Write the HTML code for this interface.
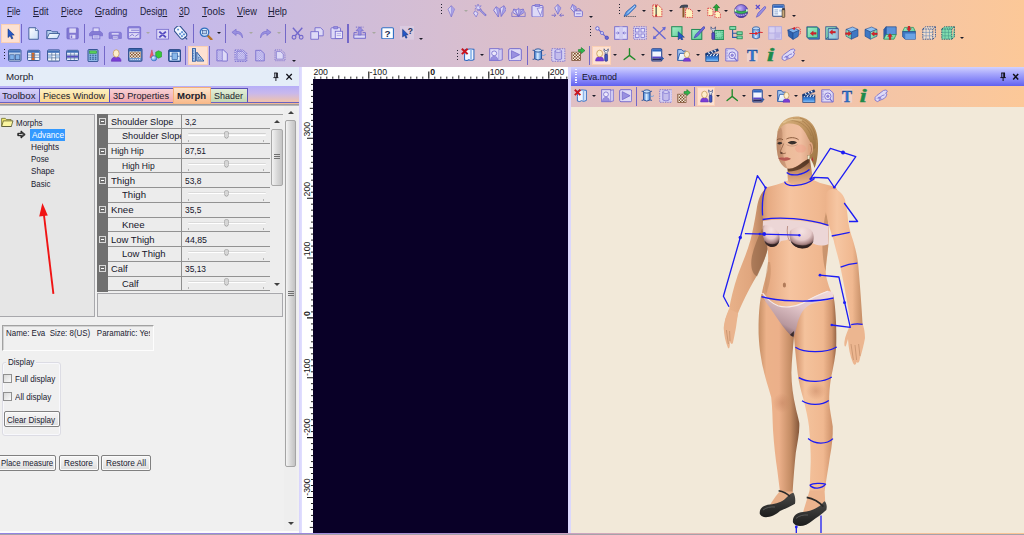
<!DOCTYPE html>
<html>
<head>
<meta charset="utf-8">
<title>Eva.mod</title>
<style>
html,body{margin:0;padding:0;}
body{width:1024px;height:535px;overflow:hidden;position:relative;background:#f0f0f0;font-family:"Liberation Sans",sans-serif;font-size:9.6px;color:#1a1a2a;}
.abs{position:absolute;}
.t{position:absolute;white-space:nowrap;line-height:1;transform-origin:0 0;}
#top{left:0;top:0;width:1024px;height:68px;background:linear-gradient(90deg,#b8b8fa 0%,#c3b9ef 15%,#ccbcde 29%,#d6bed2 43%,#e2c0c1 59%,#f2c4aa 83%,#fcc898 100%);}
.menu{top:7px;font-size:10px;color:#20203a;}
.menu u{text-decoration:underline;text-underline-offset:1px;}
.vsep{position:absolute;width:1px;background:#6a62c0;}
.grip{position:absolute;width:1px;height:14px;background:repeating-linear-gradient(180deg,#404060 0 1px,transparent 1px 3px);}
.dd{position:absolute;width:0;height:0;border-left:2px solid transparent;border-right:2px solid transparent;border-top:2.5px solid #202030;}
.ico{position:absolute;width:14px;height:14px;}
/* left panel */
#lp{left:0;top:67px;width:298.6px;height:466px;background:#f0f0f0;}
#lphead{left:0;top:0;width:299px;height:19px;background:#e4edf8;}
#tabs{left:0;top:18.8px;width:299px;height:18.4px;background:linear-gradient(180deg,#b6aef8 0%,#c8b8ec 40%,#f4c4a6 92%,#f0b48c 100%);}
.tab{position:absolute;top:2px;height:15px;border:1px solid #5a52b6;box-sizing:border-box;}
.tabt{font-size:9.8px;top:4px;color:#202030;}
#tree{left:-1px;top:48px;width:95px;height:200px;background:#e6e6e6;border:1px solid #a8a8a8;}
.tr{font-size:8.8px;color:#1a1a30;}
#grid{left:97px;top:48px;width:186px;height:175px;background:#e9e9e9;}
.grow{position:absolute;left:11px;width:162px;height:1px;background:#8c8c8c;}
.gt{font-size:9.6px;color:#15152a;}
.exp{position:absolute;left:2px;width:7px;height:7px;box-sizing:border-box;border:1px solid #d8d8d8;background:#707070;}
.exp:after{content:"";position:absolute;left:1px;top:2px;width:3px;height:1px;background:#fff;}
.sl{position:absolute;left:90px;width:78px;height:2.2px;background:linear-gradient(180deg,#c0c0c0,#ffffff 60%);border-radius:1px;}
.slt{position:absolute;left:128px;width:2.4px;height:5.6px;background:#d6d6d6;box-shadow:0 0 0 .5px #8c8c8c;border-radius:.5px .5px 1.4px 1.4px;}
.tick{position:absolute;width:1px;height:2px;background:#b4b4b4;}
.btn{position:absolute;box-sizing:border-box;border:1px solid #808080;border-radius:2px;background:linear-gradient(180deg,#f6f6f6 0%,#ececec 50%,#dcdcdc 100%);box-shadow:inset 0 0 0 1px #fbfbfb;}
.cb{position:absolute;width:9px;height:9px;box-sizing:border-box;border:1px solid #909090;background:linear-gradient(135deg,#d8d8d8,#fafafa);}
.f9{font-size:8.8px;color:#1a1a30;}
.dn{margin-top:.6px;}
/* canvas */
#ruler{left:302px;top:67px;width:266px;height:466px;background:#fff;}
#canvas{left:313px;top:79px;width:255px;height:454px;background:#090027;}
.rl{position:absolute;font-size:8.4px;color:#101010;line-height:1;white-space:nowrap;}
/* right */
#rp{left:571px;top:67px;width:453px;height:466px;background:#f2e9d9;}
#rphead{left:0;top:0;width:453px;height:19px;background:linear-gradient(180deg,#d2d2ff 0%,#a8a8fc 35%,#7e7ef6 75%,#6060ee 100%);}
#rptb{left:0;top:19px;width:453px;height:21px;background:linear-gradient(90deg,#b8b8fa 0%,#c3b9ef 15%,#ccbcde 29%,#d6bed2 43%,#e2c0c1 59%,#f2c4aa 83%,#fcc898 100%) -571px 0/1024px 100% no-repeat;}
</style>
</head>
<body>
<svg width="0" height="0" style="position:absolute"><defs>
<linearGradient id="gw" x1="0" y1="0" x2="1" y2="1"><stop offset="0" stop-color="#ffffff"/><stop offset="1" stop-color="#c6dbf7"/></linearGradient>
<radialGradient id="gs" cx=".35" cy=".35" r=".8"><stop offset="0" stop-color="#e8f4ff"/><stop offset="1" stop-color="#2f7fe0"/></radialGradient>
<radialGradient id="gp" cx=".4" cy=".3" r=".8"><stop offset="0" stop-color="#c8b8f8"/><stop offset=".6" stop-color="#6a50c8"/><stop offset="1" stop-color="#3a2a90"/></radialGradient>
<linearGradient id="gg" x1="0" y1="0" x2="1" y2="1"><stop offset="0" stop-color="#a6ecc8"/><stop offset="1" stop-color="#5fd09a"/></linearGradient>
<linearGradient id="gc" x1="0" y1="0" x2="1" y2="0"><stop offset="0" stop-color="#3f7fd4"/><stop offset=".45" stop-color="#d8ecff"/><stop offset="1" stop-color="#3f7fd4"/></linearGradient>
<linearGradient id="gk" x1="0" y1="0" x2="0" y2="1"><stop offset="0" stop-color="#1a4a9a"/><stop offset=".6" stop-color="#3f8ae0"/><stop offset="1" stop-color="#8cc4f8"/></linearGradient>
<linearGradient id="gt" x1="0" y1="0" x2="1" y2="0"><stop offset="0" stop-color="#123a7a"/><stop offset=".5" stop-color="#2f7ad8"/><stop offset="1" stop-color="#123a7a"/></linearGradient>
<pattern id="bchk" width="3" height="3" patternUnits="userSpaceOnUse"><rect width="3" height="3" fill="#fbf4e6"/><rect width="1.5" height="1.5" fill="#7a4624"/><rect x="1.5" y="1.5" width="1.5" height="1.5" fill="#7a4624"/></pattern>
<pattern id="pchk" width="2" height="2" patternUnits="userSpaceOnUse"><rect width="2" height="2" fill="#e4e0f8"/><rect width="1" height="1" fill="#9a90e0"/><rect x="1" y="1" width="1" height="1" fill="#9a90e0"/></pattern>
</defs></svg>
<div id="top" class="abs"></div>
<span class="t menu" style="left:7.3px;top:6.50px;font-size:10.2px;transform:scaleX(0.821);"><u>F</u>ile</span>
<span class="t menu" style="left:33px;top:6.50px;font-size:10.2px;transform:scaleX(0.883);"><u>E</u>dit</span>
<span class="t menu" style="left:61px;top:6.50px;font-size:10.2px;transform:scaleX(0.843);"><u>P</u>iece</span>
<span class="t menu" style="left:94.6px;top:6.50px;font-size:10.2px;transform:scaleX(0.893);"><u>G</u>rading</span>
<span class="t menu" style="left:139.8px;top:6.50px;font-size:10.2px;transform:scaleX(0.858);">Desig<u>n</u></span>
<span class="t menu" style="left:179.3px;top:6.50px;font-size:10.2px;transform:scaleX(0.821);"><u>3</u>D</span>
<span class="t menu" style="left:202px;top:6.50px;font-size:10.2px;transform:scaleX(0.967);"><u>T</u>ools</span>
<span class="t menu" style="left:236.7px;top:6.50px;font-size:10.2px;transform:scaleX(0.903);"><u>V</u>iew</span>
<span class="t menu" style="left:268px;top:6.50px;font-size:10.2px;transform:scaleX(0.906);"><u>H</u>elp</span>
<i class="grip" style="left:440.79999999999995px;top:4.4px;height:11.2px;background:repeating-linear-gradient(180deg,#20202e 0 1.2px,transparent 1.2px 2.9px);width:1.5px"></i>
<svg class="ico" style="left:446.3px;top:4.5px;width:10.6px;height:12.6px" viewBox="0 0 14 14" preserveAspectRatio="none"><path d="M7,0.8 L11.3,4.6 L7,13.2 L2.7,4.6 Z" fill="#dedaf7" stroke="#7268cc" stroke-width=".8"/><path d="M7,0.8 L11.3,4.6 L7,13.2 Z" fill="#9990e0" opacity=".75"/><path d="M7,0.8 V13.2" stroke="#7268cc" stroke-width=".5"/></svg>
<i class="dd" style="left:463.6px;top:9.600000000000001px;border-top-color:#a8a8a0"></i>
<svg class="ico" style="left:473px;top:4.0px;width:14px;height:13.5px" viewBox="0 0 14 14" preserveAspectRatio="none"><path d="M2,7 L5,9.5 L3.2,13.4 L.6,9.6 Z" fill="#dedaf7" stroke="#7268cc" stroke-width=".7"/><path d="M5.5,4.5 L13,12" stroke="#7268cc" stroke-width="2"/><path d="M6.2,5.2 L12.4,11.4" stroke="#dedaf7" stroke-width=".6"/><path d="M5,0 L5.8,2.4 L8.2,1.8 L6.6,3.8 L8.4,5.6 L5.9,5.2 L5,7.4 L4.3,5 L1.8,5.2 L3.6,3.6 L2.2,1.6 L4.4,2.4 Z" fill="#dedaf7" stroke="#7268cc" stroke-width=".6"/></svg>
<svg class="ico" style="left:492.8px;top:4.5px;width:13.6px;height:12.8px" viewBox="0 0 14 14" preserveAspectRatio="none"><g transform="rotate(-12 4.5 7)"><path d="M4.2,1.8 L7.4,5 L4.2,13.2 L1.0,5 Z" fill="#dedaf7" stroke="#7268cc" stroke-width=".8"/><path d="M4.2,1.8 L7.4,5 L4.2,13.2 Z" fill="#9990e0" opacity=".75"/><path d="M4.2,1.8 V13.2" stroke="#7268cc" stroke-width=".5"/></g><g transform="rotate(14 9.5 7)"><path d="M9.8,0.6 L13.0,4.2 L9.8,12.6 L6.6000000000000005,4.2 Z" fill="#dedaf7" stroke="#7268cc" stroke-width=".8"/><path d="M9.8,0.6 L13.0,4.2 L9.8,12.6 Z" fill="#9990e0" opacity=".75"/><path d="M9.8,0.6 V12.6" stroke="#7268cc" stroke-width=".5"/></g></svg>
<svg class="ico" style="left:511.2px;top:5.5px;width:15px;height:11.8px" viewBox="0 0 14 14" preserveAspectRatio="none"><g transform="rotate(-28 7 12)"><path d="M7,2.5 L9.6,5.5 L7,12 L4.4,5.5 Z" fill="#dedaf7" stroke="#7268cc" stroke-width=".8"/><path d="M7,2.5 L9.6,5.5 L7,12 Z" fill="#9990e0" opacity=".75"/><path d="M7,2.5 V12" stroke="#7268cc" stroke-width=".5"/></g><g transform="rotate(28 7 12)"><path d="M7,2.5 L9.6,5.5 L7,12 L4.4,5.5 Z" fill="#dedaf7" stroke="#7268cc" stroke-width=".8"/><path d="M7,2.5 L9.6,5.5 L7,12 Z" fill="#9990e0" opacity=".75"/><path d="M7,2.5 V12" stroke="#7268cc" stroke-width=".5"/></g><path d="M7,2.8 L9.6,5.8 L7,12.2 L4.4,5.8 Z" fill="#dedaf7" stroke="#7268cc" stroke-width=".8"/><path d="M7,2.8 L9.6,5.8 L7,12.2 Z" fill="#9990e0" opacity=".75"/><path d="M7,2.8 V12.2" stroke="#7268cc" stroke-width=".5"/><path d="M.8,7.5 V12.6 H13.2 V7.5" fill="none" stroke="#7268cc" stroke-width=".8"/></svg>
<svg class="ico" style="left:531px;top:3.9px;width:13.4px;height:13.6px" viewBox="0 0 14 14" preserveAspectRatio="none"><rect x="1" y="1.6" width="11.5" height="11.8" rx="1" fill="#dedaf7" stroke="#7268cc" stroke-width="1"/><rect x="4.2" y=".4" width="5" height="2.4" fill="#9990e0" stroke="#7268cc" stroke-width=".5"/><path d="M6.5,4.5 L12.5,3.6 L10,12 Z" fill="#ebe8fb" stroke="#7268cc" stroke-width=".7"/></svg>
<svg class="ico" style="left:550.6px;top:3.9px;width:13.6px;height:13.6px" viewBox="0 0 14 14" preserveAspectRatio="none"><path d="M7,0.5 L10.2,4 L7,10.5 L3.8,4 Z" fill="#dedaf7" stroke="#7268cc" stroke-width=".8"/><path d="M7,0.5 L10.2,4 L7,10.5 Z" fill="#9990e0" opacity=".75"/><path d="M7,0.5 V10.5" stroke="#7268cc" stroke-width=".5"/><path d="M.6,11.6 H5 M3.2,9.8 L5,11.6 L3.2,13.4 M13.4,11.6 H9 M10.8,9.8 L9,11.6 L10.8,13.4" fill="none" stroke="#7268cc" stroke-width=".9"/></svg>
<svg class="ico" style="left:570.4px;top:4.1px;width:13.2px;height:13.4px" viewBox="0 0 14 14" preserveAspectRatio="none"><g transform="rotate(-18 4 5)"><path d="M4,0.3 L7,3.8 L4,10.5 L1,3.8 Z" fill="#dedaf7" stroke="#7268cc" stroke-width=".8"/><path d="M4,0.3 L7,3.8 L4,10.5 Z" fill="#9990e0" opacity=".75"/><path d="M4,0.3 V10.5" stroke="#7268cc" stroke-width=".5"/></g><rect x="4.6" y="7.2" width="8.6" height="6" rx="1" fill="#dedaf7" stroke="#7268cc" stroke-width=".9"/><path d="M6.8,7.2 V5.8 Q8.9,3.6 11,5.8 V7.2" fill="none" stroke="#7268cc" stroke-width="1"/><path d="M6.5,10.2 H11.3" stroke="#7268cc" stroke-width=".8"/></svg>
<i class="dd" style="left:588.5px;top:15.600000000000001px;border-top-color:#1c1c28"></i>
<i class="grip" style="left:618.8px;top:4.4px;height:11.2px;background:repeating-linear-gradient(180deg,#20202e 0 1.2px,transparent 1.2px 2.9px);width:1.5px"></i>
<svg class="ico" style="left:623.4px;top:4.2px;width:14.2px;height:13.6px" viewBox="0 0 14 14" preserveAspectRatio="none"><path d="M1,13 H13" stroke="#283848" stroke-width="1" stroke-dasharray="1.2 .9"/><path d="M1,12.6 L3.2,8 L11.5,.8 Q13.6,.8 12.6,3 L4.8,11.2 Z" fill="#5b9be6" stroke="#2456a8" stroke-width=".7"/><path d="M4.4,9.4 L11.8,2" stroke="#d8eafc" stroke-width=".8"/></svg>
<i class="dd" style="left:641.7px;top:9.8px;border-top-color:#1c1c28"></i>
<svg class="ico" style="left:651.8px;top:4.2px;width:12px;height:13.6px" viewBox="0 0 14 14" preserveAspectRatio="none"><path d="M1,1 H7 L11.5,4.6 V13 H1 Z" fill="#fff4c2" stroke="#d8202a" stroke-width=".9" stroke-dasharray="1.5 .9"/><path d="M4.8,1.2 V12.8" stroke="#181818" stroke-width="1.1"/><path d="M4.8,.6 L3.4,3 H6.2 Z M4.8,13.4 L3.4,11 H6.2 Z" fill="#d8202a"/></svg>
<i class="dd" style="left:669px;top:9.8px;border-top-color:#1c1c28"></i>
<svg class="ico" style="left:678.6px;top:3.8px;width:14.2px;height:14px" viewBox="0 0 14 14" preserveAspectRatio="none"><path d="M6.5,4.8 H10.5 L13.6,7.6 V13.4 H6.5 Z" fill="#fff2c0" stroke="#d8202a" stroke-width=".8" stroke-dasharray="1.4 .9"/><path d="M4.4,2.2 V13.4" stroke="#8a5a28" stroke-width="1.9"/><path d="M.8,3.8 Q1.4,.8 5,1 H8.4 V3.2 H4.8 Q2.6,3 .8,3.8 Z" fill="#4a5466" stroke="#232a38" stroke-width=".6"/></svg>
<i class="dd" style="left:696.9px;top:9.8px;border-top-color:#1c1c28"></i>
<svg class="ico" style="left:706.8px;top:3.8px;width:14px;height:14.2px" viewBox="0 0 14 14" preserveAspectRatio="none"><path d="M.8,4.2 H4 L6,6 V11.4 H.8 Z" fill="#fff2c0" stroke="#d8202a" stroke-width=".8" stroke-dasharray="1.4 .9"/><path d="M8,7.4 H11.4 L13.4,9.2 V13.6 H8 Z" fill="#fff2c0" stroke="#d8202a" stroke-width=".8" stroke-dasharray="1.4 .9"/><path d="M9.4,.2 L12.6,3.6 H10.6 V6.4 H8.2 V3.6 H6.2 Z" fill="#28a83a" stroke="#126a22" stroke-width=".6"/></svg>
<i class="dd" style="left:724.4px;top:9.8px;border-top-color:#1c1c28"></i>
<svg class="ico" style="left:733.6px;top:3.8px;width:14.4px;height:14.2px" viewBox="0 0 14 14" preserveAspectRatio="none"><circle cx="7" cy="7" r="6.5" fill="url(#gp)" stroke="#3a2a8a" stroke-width=".6"/><path d="M.8,5.4 Q7,9.6 13.2,5.4 V7.6 Q7,11.6 .8,7.6 Z" fill="#38b85a" stroke="#1a6a32" stroke-width=".5"/><path d="M1.4,9.6 Q7,12.8 12.6,9.6" stroke="#e8e4f8" stroke-width="1.1" fill="none" stroke-dasharray="1 1"/><rect x=".6" y="5.2" width="1.6" height="2.2" fill="#e8ffe8"/><rect x="11.8" y="5.2" width="1.6" height="2.2" fill="#e8ffe8"/></svg>
<svg class="ico" style="left:754px;top:4px;width:13px;height:14px" viewBox="0 0 14 14" preserveAspectRatio="none"><path d="M2.5,13.2 L4.4,9 L11.2,2.6 Q13.4,2.2 12.4,4.4 L5.8,11.6 Z" fill="#9990e0" stroke="#6258c8" stroke-width=".7"/><path d="M2,1 L6.2,5 M6.2,1 L2,5" stroke="#5a4cd0" stroke-width="1.4"/></svg>
<svg class="ico" style="left:772.4px;top:4px;width:14.2px;height:13.8px" viewBox="0 0 14 14" preserveAspectRatio="none"><rect x=".7" y=".8" width="11.2" height="11.6" rx=".8" fill="#f4f8fe" stroke="#2b4d8c" stroke-width="1"/><rect x="1.2" y="1.3" width="10.2" height="2.6" fill="#2f66c0"/><path d="M2.4,6 H6 M2.4,8 H6 M2.4,10 H6" stroke="#8aa4cc" stroke-width=".9"/><rect x="7" y="5.6" width="3.4" height="2.2" fill="#b8cce8"/><rect x="10" y="5.4" width="2.6" height="8.2" rx=".6" fill="#c8a878" stroke="#4a3a28" stroke-width=".7"/><rect x="10" y="4.2" width="2.6" height="2" fill="#3a3a44"/></svg>
<i class="dd" style="left:791.7px;top:15.400000000000002px;border-top-color:#1c1c28"></i>
<i class="abs" style="left:1.2px;top:24px;width:19.2px;height:19.200000000000003px;background:#fde1d2;box-shadow:inset 0 0 0 1px #fbd0b4"></i>
<svg class="ico" style="left:4.6px;top:27.6px;width:12px;height:12px" viewBox="0 0 14 14" preserveAspectRatio="none"><path d="M3.5,1 V11.2 L6,9 L7.8,12.8 L9.3,12.1 L7.5,8.4 L10.8,8.2 Z" fill="#2458c8" stroke="#123070" stroke-width=".6"/></svg>
<i class="vsep" style="left:21.1px;top:24px;height:19.200000000000003px;background:#7468c8;width:1.4px"></i>
<svg class="ico" style="left:27px;top:27.4px;width:13.2px;height:13px" viewBox="0 0 14 14" preserveAspectRatio="none"><path d="M2,.8 H9 L12,3.8 V13.2 H2 Z" fill="url(#gw)" stroke="#2b4d8c" stroke-width=".9"/><path d="M9,.8 V3.8 H12" fill="#e8f0fc" stroke="#2b4d8c" stroke-width=".7"/></svg>
<svg class="ico" style="left:46px;top:28.4px;width:14.2px;height:11.8px" viewBox="0 0 14 14" preserveAspectRatio="none"><path d="M.8,12.5 V3 H5 L6.2,4.5 H11.5 V6.5" fill="#b8d0f0" stroke="#2b4d8c" stroke-width=".9"/><path d="M3.3,6.5 H13.6 L11.2,12.6 H.8 Z" fill="url(#gw)" stroke="#2b4d8c" stroke-width=".9"/></svg>
<svg class="ico" style="left:66px;top:27.2px;width:13.2px;height:12.8px" viewBox="0 0 14 14" preserveAspectRatio="none"><rect x="1" y="1" width="12" height="12" rx="1" fill="#8278d2" stroke="#7066c8" stroke-width=".8"/><rect x="3.5" y="1.5" width="7" height="4.8" fill="#dedaf7"/><rect x="4" y="8.5" width="6" height="4.2" fill="#dedaf7"/><rect x="5" y="9.3" width="1.6" height="2.8" fill="#8278d2"/></svg>
<i class="vsep" style="left:83.8px;top:24px;height:19.200000000000003px;background:#7468c8;width:1.4px"></i>
<svg class="ico" style="left:89px;top:27px;width:14.2px;height:13px" viewBox="0 0 14 14" preserveAspectRatio="none"><rect x="4" y="1" width="6" height="4.5" fill="#dedaf7" stroke="#7268cc" stroke-width=".8"/><path d="M2.5,4.8 H11.5 L13.5,7 V9.5 H.5 V7 Z" fill="#857bd4" stroke="#7268cc" stroke-width=".6"/><rect x="3.3" y="8.6" width="7.4" height="4.2" fill="#dedaf7" stroke="#7268cc" stroke-width=".8"/><path d="M4.5,10.2 H9.5 M4.5,11.5 H9.5" stroke="#9990e0" stroke-width=".6"/></svg>
<svg class="ico" style="left:108px;top:29px;width:14.4px;height:11px" viewBox="0 0 14 14" preserveAspectRatio="none"><path d="M1,12 V5.5 Q1,4 2.5,4 H11.5 Q13,4 13,5.5 V12 H10.5 V8 H3.5 V12 Z" fill="#8a80d8" stroke="#7268cc" stroke-width=".7"/><rect x="3.6" y="5.2" width="6.8" height="2" fill="#dedaf7"/><rect x="4.2" y="8.8" width="5.6" height="4" fill="#dedaf7" stroke="#7268cc" stroke-width=".7"/><path d="M5,10.5 H9" stroke="#7268cc" stroke-width=".6"/></svg>
<svg class="ico" style="left:127.4px;top:26.2px;width:14.4px;height:13.8px" viewBox="0 0 14 14" preserveAspectRatio="none"><rect x=".7" y=".7" width="12.6" height="12.6" rx="1.2" fill="#8a80d8" stroke="#7268cc" stroke-width=".8"/><rect x="2" y="2.5" width="10" height="3.6" fill="#dedaf7"/><rect x="2" y="7.2" width="10" height="4.8" fill="#dedaf7"/><path d="M4,4.3 H12 M2.5,10.5 L5,8.5 L7,10 M8,10.5 L11.5,8" stroke="#7268cc" stroke-width=".8" fill="none"/></svg>
<i class="dd" style="left:146px;top:32.199999999999996px;border-top-color:#a8a8a0"></i>
<svg class="ico" style="left:155.6px;top:27.6px;width:13.2px;height:12.4px" viewBox="0 0 14 14" preserveAspectRatio="none"><rect x=".8" y="1.5" width="12.4" height="11" fill="#dedaf7" stroke="#7268cc" stroke-width=".9"/><path d="M3.5,4 L10.5,10.5 M10.5,4 L3.5,10.5" stroke="#5248c0" stroke-width="2"/><path d="M3,7.2 H11" stroke="#dedaf7" stroke-width=".5"/></svg>
<svg class="ico" style="left:174.2px;top:26.2px;width:14px;height:14px" viewBox="0 0 14 14" preserveAspectRatio="none"><g transform="rotate(-40 7 7)"><rect x="3.2" y="-.5" width="7.6" height="13.5" rx="2.6" fill="#f4f8ff" stroke="#2b4d8c" stroke-width="1"/><circle cx="7" cy="2.5" r="1" fill="#5b8fd6"/><rect x="4.8" y="6" width="1.8" height="2" fill="#5b8fd6"/><rect x="7.5" y="6" width="1.8" height="2" fill="#5b8fd6"/><rect x="4.8" y="9" width="1.8" height="2" fill="#5b8fd6"/><rect x="7.5" y="9" width="1.8" height="2" fill="#5b8fd6"/></g><path d="M10.6,10.8 L13.2,13.4" stroke="#2b4d8c" stroke-width="1.1"/></svg>
<i class="vsep" style="left:192.8px;top:24px;height:19.200000000000003px;background:#7468c8;width:1.4px"></i>
<svg class="ico" style="left:199px;top:26.8px;width:13.8px;height:13.6px" viewBox="0 0 14 14" preserveAspectRatio="none"><path d="M8.3,8.3 L12.6,12.8" stroke="#b87428" stroke-width="2.4" stroke-linecap="round"/><circle cx="5.6" cy="5.4" r="4.3" fill="#d6e8fb" stroke="#2f6fbe" stroke-width="1.3"/><rect x="3.6" y="3.6" width="4" height="3.4" fill="#b8d0ee" stroke="#3b5f98" stroke-width=".7"/></svg>
<i class="dd" style="left:216.8px;top:32.199999999999996px;border-top-color:#1c1c28"></i>
<i class="vsep" style="left:224.70000000000002px;top:24px;height:19.200000000000003px;background:#7468c8;width:1.4px"></i>
<svg class="ico" style="left:231.4px;top:28.2px;width:13px;height:11px" viewBox="0 0 14 14" preserveAspectRatio="none"><path d="M1,5.5 L5.5,1.5 V4.2 Q12.5,4 12.4,12.6 Q10.2,6.6 5.5,6.8 V9.5 Z" fill="#9990e0" stroke="#7268cc" stroke-width=".7"/></svg>
<i class="dd" style="left:249px;top:32.199999999999996px;border-top-color:#a8a8a0"></i>
<svg class="ico" style="left:258.8px;top:28.2px;width:13px;height:11px" viewBox="0 0 14 14" preserveAspectRatio="none"><path d="M13,5.5 L8.5,1.5 V4.2 Q1.5,4 1.6,12.6 Q3.8,6.6 8.5,6.8 V9.5 Z" fill="#9990e0" stroke="#7268cc" stroke-width=".7"/></svg>
<i class="dd" style="left:277px;top:32.199999999999996px;border-top-color:#a8a8a0"></i>
<i class="vsep" style="left:284.8px;top:24px;height:19.200000000000003px;background:#7468c8;width:1.4px"></i>
<svg class="ico" style="left:291.2px;top:27px;width:13.2px;height:13px" viewBox="0 0 14 14" preserveAspectRatio="none"><path d="M2,.8 L9.5,9.5 M12,.8 L4.5,9.5" stroke="#7268cc" stroke-width="1.5"/><circle cx="3.2" cy="11" r="2" fill="none" stroke="#7268cc" stroke-width="1.2"/><circle cx="10.8" cy="11" r="2" fill="none" stroke="#7268cc" stroke-width="1.2"/></svg>
<svg class="ico" style="left:310px;top:26.6px;width:14px;height:13px" viewBox="0 0 14 14" preserveAspectRatio="none"><path d="M5,.8 H10.5 L13.2,3.5 V9.5 H5 Z" fill="#dedaf7" stroke="#7268cc" stroke-width=".9"/><path d="M.8,5 H8.5 V13.2 H.8 Z" fill="#dedaf7" stroke="#7268cc" stroke-width=".9"/></svg>
<svg class="ico" style="left:329.6px;top:26.4px;width:13.4px;height:13.4px" viewBox="0 0 14 14" preserveAspectRatio="none"><rect x="1" y="1.8" width="10" height="11.4" rx="1" fill="#dedaf7" stroke="#7268cc" stroke-width=".9"/><rect x="4" y=".5" width="4" height="2.6" fill="#9990e0" stroke="#7268cc" stroke-width=".6"/><rect x="5.5" y="5.5" width="7.5" height="7.5" fill="#ebe8fb" stroke="#7268cc" stroke-width=".9"/><path d="M7,8 H11.5 M7,10 H11.5" stroke="#9990e0" stroke-width=".7"/></svg>
<i class="vsep" style="left:347.40000000000003px;top:24px;height:19.200000000000003px;background:#7468c8;width:1.4px"></i>
<svg class="ico" style="left:352.8px;top:26.4px;width:13.4px;height:13.2px" viewBox="0 0 14 14" preserveAspectRatio="none"><path d="M1,7 H4 M10,7 H13 V13 H1 V7" fill="none" stroke="#7268cc" stroke-width="1"/><path d="M1,9.5 H13 V13 H1 Z" fill="#dedaf7" stroke="#7268cc" stroke-width=".8"/><path d="M7,1 L10.8,5 H8.5 V9.5 H5.5 V5 H3.2 Z" fill="#9990e0" stroke="#7268cc" stroke-width=".7"/><path d="M3,1.2 H11" stroke="#7268cc" stroke-width="1" stroke-dasharray="1.4 1"/></svg>
<i class="dd" style="left:371.5px;top:32.199999999999996px;border-top-color:#a8a8a0"></i>
<svg class="ico" style="left:381.2px;top:26.6px;width:13.2px;height:12.6px" viewBox="0 0 14 14" preserveAspectRatio="none"><rect x=".8" y=".8" width="12.4" height="12.4" rx="1.2" fill="#fdfeff" stroke="#2f6fc4" stroke-width="1.2"/><text x="7" y="11" font-family="Liberation Sans" font-weight="bold" font-size="10.5" text-anchor="middle" fill="#1c2c50">?</text></svg>
<svg class="ico" style="left:400px;top:26px;width:14px;height:13.6px" viewBox="0 0 14 14" preserveAspectRatio="none"><rect x="0" y="0" width="14" height="14" fill="#ddd0e6" opacity=".7"/><path d="M2.6,3.4 V11.4 L4.5,9.7 L5.9,12.6 L7.1,12 L5.8,9.2 L8.2,9 Z" fill="#2458c8" stroke="#123070" stroke-width=".5"/><text x="10.3" y="8" font-family="Liberation Sans" font-weight="bold" font-size="8.5" text-anchor="middle" fill="#26345c">?</text></svg>
<i class="dd" style="left:419px;top:37.599999999999994px;border-top-color:#1c1c28"></i>
<i class="grip" style="left:589.9px;top:26.4px;height:11.800000000000004px;background:repeating-linear-gradient(180deg,#20202e 0 1.2px,transparent 1.2px 2.9px);width:1.5px"></i>
<svg class="ico" style="left:594.8px;top:26.2px;width:14px;height:14px" viewBox="0 0 14 14" preserveAspectRatio="none"><path d="M2.6,2.6 L11.6,11.6" stroke="#6868d4" stroke-width="1.3"/><circle cx="2.4" cy="2.4" r="1.7" fill="#e6e4fa" stroke="#6868d4" stroke-width="1"/><circle cx="7" cy="7" r="1.5" fill="#e6e4fa" stroke="#6868d4" stroke-width=".9"/><circle cx="11.8" cy="11.8" r="1.7" fill="#6868d4" stroke="#4a4ac0" stroke-width=".8"/></svg>
<svg class="ico" style="left:614px;top:26.2px;width:14px;height:14px" viewBox="0 0 14 14" preserveAspectRatio="none"><rect x=".7" y=".7" width="5.6" height="12.6" fill="#dedaf7" stroke="#7268cc" stroke-width=".9"/><rect x="7.7" y=".7" width="5.6" height="12.6" fill="#dedaf7" stroke="#7268cc" stroke-width=".9"/><rect x="5.2" y=".7" width="3.6" height="12.6" fill="#cfcaf2"/><path d="M1.8,7 H5 M3.8,5.6 L5.2,7 L3.8,8.4 M12.2,7 H9 M10.2,5.6 L8.8,7 L10.2,8.4" fill="none" stroke="#7268cc" stroke-width=".8"/></svg>
<svg class="ico" style="left:633.2px;top:26.2px;width:14px;height:14px" viewBox="0 0 14 14" preserveAspectRatio="none"><rect x=".7" y=".7" width="12.6" height="12.6" fill="#d8d2f2" stroke="#7268cc" stroke-width=".8" stroke-dasharray="1.4 1"/><rect x="2.4" y="2.4" width="3.6" height="3.6" fill="#e8e4fa" stroke="#7268cc" stroke-width=".7"/><rect x="8" y="2.4" width="3.6" height="3.6" fill="#e8e4fa" stroke="#7268cc" stroke-width=".7"/><rect x="2.4" y="8" width="3.6" height="3.6" fill="#e8e4fa" stroke="#7268cc" stroke-width=".7"/><rect x="8" y="8" width="3.6" height="3.6" fill="#e8e4fa" stroke="#7268cc" stroke-width=".7"/></svg>
<svg class="ico" style="left:652px;top:26.2px;width:14.6px;height:14px" viewBox="0 0 14 14" preserveAspectRatio="none"><path d="M1,1 L13,13 M1.6,12.4 L12.6,1.6" stroke="#6868d4" stroke-width="1.3"/><path d="M13.2,.8 L9.4,1.6 L12.4,4.6 Z M.8,13.2 L4.6,12.4 L1.6,9.4 Z" fill="#6868d4"/></svg>
<svg class="ico" style="left:671.4px;top:26.2px;width:14.4px;height:14.2px" viewBox="0 0 14 14" preserveAspectRatio="none"><rect x=".7" y=".7" width="10" height="9.6" fill="url(#gg)" stroke="#1f8a55" stroke-width="1"/><path d="M7,5.6 V13.6 L9,11.8 L10.4,14 L11.6,13.4 L10.4,11.2 L13,11 Z" fill="#2458c8" stroke="#123070" stroke-width=".5"/></svg>
<svg class="ico" style="left:690.6px;top:25.8px;width:14.4px;height:14.2px" viewBox="0 0 14 14" preserveAspectRatio="none"><rect x=".7" y="3.4" width="9.8" height="9.8" fill="url(#gg)" stroke="#1f8a55" stroke-width="1"/><path d="M3,11.8 L4.6,8.4 L12.2,.6 Q14,.6 13.2,2.4 L6,10.4 Z" fill="#6a6ad8" stroke="#3a3aa8" stroke-width=".6"/></svg>
<svg class="ico" style="left:710px;top:26.0px;width:14.2px;height:14.2px" viewBox="0 0 14 14" preserveAspectRatio="none"><rect x="4.6" y="4.4" width="9" height="8.8" fill="url(#gg)" stroke="#1f8a55" stroke-width="1"/><rect x="6.2" y="6" width="5.8" height="5.6" fill="none" stroke="#1f8a55" stroke-width=".6" stroke-dasharray="1 .9"/><path d="M1,.8 Q.2,3.6 2.4,4.6 V6.6 H4 V4.6 Q6.2,3.6 5.4,.8 L4.2,2.8 H2.2 Z" fill="#e8eef8" stroke="#3a4a7a" stroke-width=".7"/><rect x="1.8" y="6.6" width="2.8" height="6.8" rx=".8" fill="#5a4cc8" stroke="#2a2a7a" stroke-width=".6"/></svg>
<svg class="ico" style="left:729.2px;top:26.2px;width:14px;height:14px" viewBox="0 0 14 14" preserveAspectRatio="none"><path d="M3.6,3.4 V11.4 H8 M3.6,7.2 H8" fill="none" stroke="#2a5aa8" stroke-width="1.1"/><rect x=".8" y=".6" width="6" height="2.8" fill="#7fdcae" stroke="#1f8a55" stroke-width=".8"/><rect x="8" y="5.8" width="5.2" height="2.8" fill="#7fdcae" stroke="#1f8a55" stroke-width=".8"/><rect x="8" y="10" width="5.2" height="2.8" fill="#7fdcae" stroke="#1f8a55" stroke-width=".8"/></svg>
<svg class="ico" style="left:748.6px;top:26.2px;width:14.2px;height:14px" viewBox="0 0 14 14" preserveAspectRatio="none"><path d="M3.6,2.4 V11.6 Q7,14 10.4,11.6 V2.4 Z" fill="url(#gc)" stroke="#2a5aa0" stroke-width=".8"/><ellipse cx="7" cy="2.4" rx="3.4" ry="1.6" fill="#b8d6f6" stroke="#2a5aa0" stroke-width=".8"/><path d="M.4,7.4 H7.6 M13.6,6.6 Q11,5.6 8.8,7" stroke="#d8202a" stroke-width="1" fill="none"/><path d="M9,7.4 L6.2,5.2 V9.6 Z" fill="#d8202a"/></svg>
<svg class="ico" style="left:767.6px;top:26.2px;width:14.2px;height:14px" viewBox="0 0 14 14" preserveAspectRatio="none"><rect x=".7" y=".7" width="12.6" height="12.6" fill="#cfc8ee" stroke="#b0a8e4" stroke-width=".8"/><path d="M.7,7 H13.3 M7,.7 V13.3" stroke="#b0a8e4" stroke-width=".9"/><rect x="7.2" y="7.2" width="4.6" height="4.6" fill="#bdb6e8"/><rect x="1.6" y="1.6" width="4.8" height="4.8" fill="#d8d2f4"/></svg>
<svg class="ico" style="left:787px;top:26.2px;width:14.2px;height:14px" viewBox="0 0 14 14" preserveAspectRatio="none"><path d="M.8,4 L7,2 L12,4.4 L6,7 Z" fill="#7fb4ee" stroke="#234a8c" stroke-width=".6"/><path d="M.8,4 L6,7 V13.4 L1.6,10.2 Z" fill="#2f62b0" stroke="#234a8c" stroke-width=".6"/><path d="M6,7 L12,4.4 L11,10.4 L6,13.4 Z" fill="#3f78c4" stroke="#234a8c" stroke-width=".6"/><path d="M7,2.4 Q12.6,-.6 13.4,4.6 Q13.6,8 11.6,9.4" fill="none" stroke="#d8202a" stroke-width=".8" stroke-dasharray="1.4 .8"/><path d="M4.8,2.6 L8,1 L7.6,4.2 Z" fill="#d8202a"/></svg>
<svg class="ico" style="left:806.2px;top:26.2px;width:14px;height:14px" viewBox="0 0 14 14" preserveAspectRatio="none"><path d="M.8,.8 H11 L13.4,2.8 V13.2 H3 L.8,11.2 Z" fill="#3f78c4" stroke="#234a8c" stroke-width=".7"/><rect x="1.4" y="1.4" width="10" height="10" fill="url(#gg)" stroke="#1f8a55" stroke-width=".5"/><path d="M10.2,6.5 H7.2 V5.0 L4.2,7.4 L7.2,9.8 V8.3 H10.2 Z" fill="#d8202a" stroke="#a01018" stroke-width=".3"/></svg>
<svg class="ico" style="left:825.2px;top:26.2px;width:14px;height:14px" viewBox="0 0 14 14" preserveAspectRatio="none"><rect x=".8" y=".8" width="10.4" height="12.4" fill="url(#gg)" stroke="#234a8c" stroke-width=".8"/><path d="M3.2,2.6 H13.2 V13.2 H3.2 Z" fill="#a8ccf2" fill-opacity=".75" stroke="#234a8c" stroke-width=".8"/><path d="M.8,13.2 L3.2,11 M11.2,.8 L13.2,2.6" stroke="#234a8c" stroke-width=".7"/><path d="M10.4,5.3 H7.4 V3.8000000000000003 L4.4,6.2 L7.4,8.6 V7.1000000000000005 H10.4 Z" fill="#d8202a" stroke="#a01018" stroke-width=".3"/></svg>
<svg class="ico" style="left:844.6px;top:26.2px;width:14px;height:14px" viewBox="0 0 14 14" preserveAspectRatio="none"><path d="M1,3.4 L7.6,1 L13,3.4 L6.4,6 Z" fill="#8fc0f2" stroke="#234a8c" stroke-width=".6"/><path d="M1,3.4 L6.4,6 V13.2 L1,10.2 Z" fill="url(#gg)" stroke="#234a8c" stroke-width=".6"/><path d="M6.4,6 L13,3.4 V10.2 L6.4,13.2 Z" fill="#3f78c4" stroke="#234a8c" stroke-width=".6"/><path d="M0.3999999999999999,6.699999999999999 H3.4 V5.199999999999999 L6.4,7.6 L3.4,10.0 V8.5 H0.3999999999999999 Z" fill="#d8202a" stroke="#a01018" stroke-width=".3"/></svg>
<svg class="ico" style="left:864px;top:26.2px;width:14px;height:14px" viewBox="0 0 14 14" preserveAspectRatio="none"><path d="M1,3.4 L7.6,1 L13,3.4 L6.4,6 Z" fill="#8fc0f2" stroke="#234a8c" stroke-width=".6"/><path d="M1,3.4 L6.4,6 V13.2 L1,10.2 Z" fill="#3f78c4" stroke="#234a8c" stroke-width=".6"/><path d="M6.4,6 L13,3.4 V10.2 L6.4,13.2 Z" fill="url(#gg)" stroke="#234a8c" stroke-width=".6"/><path d="M13.2,6.8999999999999995 H10.2 V5.4 L7.199999999999999,7.8 L10.2,10.2 V8.7 H13.2 Z" fill="#d8202a" stroke="#a01018" stroke-width=".3"/></svg>
<svg class="ico" style="left:883px;top:26.2px;width:14px;height:14px" viewBox="0 0 14 14" preserveAspectRatio="none"><path d="M3,.8 H13.2 V8.6 H3 Z" fill="#5b92da" stroke="#234a8c" stroke-width=".7"/><path d="M3,.8 L.8,3.4 V12.8 L3,8.6 Z" fill="#2f62b0" stroke="#234a8c" stroke-width=".6"/><path d="M3,8.6 H13.2 L11,13.2 H.8 Z" fill="url(#gg)" stroke="#1f8a55" stroke-width=".7"/><path d="M6.1,13.6 V10.6 H4.6 L7,7.6 L9.4,10.6 H7.9 V13.6 Z" fill="#d8202a" stroke="#a01018" stroke-width=".3"/></svg>
<svg class="ico" style="left:902.4px;top:26.2px;width:14px;height:14px" viewBox="0 0 14 14" preserveAspectRatio="none"><path d="M2.6,1.4 H11.4 L13.4,5.6 H.6 Z" fill="url(#gg)" stroke="#1f8a55" stroke-width=".7"/><path d="M.6,5.6 H13.4 V13.2 H3.2 L.6,10.8 Z" fill="#3f78c4" stroke="#234a8c" stroke-width=".7"/><path d="M3.2,7.6 H13.4 V13.2 H3.2 Z" fill="#6aa2e4"/><path d="M6.1,-0.3999999999999999 V2.6 H4.6 L7,5.6 L9.4,2.6 H7.9 V-0.3999999999999999 Z" fill="#d8202a" stroke="#a01018" stroke-width=".3"/></svg>
<svg class="ico" style="left:921.6px;top:26.2px;width:14.2px;height:14px" viewBox="0 0 14 14" preserveAspectRatio="none"><path d="M.8,3 H10.6 V13.2 H.8 Z M.8,3 L3.4,.8 H13.2 L10.6,3 M13.2,.8 V11 L10.6,13.2" fill="#f2eee6" fill-opacity=".6" stroke="#234a8c" stroke-width=".9" stroke-dasharray="1.5 .9"/><path d="M4,3 V13.2 M7.4,3 V13.2 M.8,6.4 H10.6 M.8,9.8 H10.6" stroke="#6a8ab8" stroke-width=".6"/></svg>
<svg class="ico" style="left:941px;top:26.2px;width:14.2px;height:14px" viewBox="0 0 14 14" preserveAspectRatio="none"><path d="M.8,3 H10.6 V13.2 H.8 Z M.8,3 L3.4,.8 H13.2 L10.6,3 M13.2,.8 V11 L10.6,13.2" fill="#7fdcae" stroke="#1a5a6a" stroke-width=".9" stroke-dasharray="1.5 .9"/><path d="M4,3 V13.2 M7.4,3 V13.2 M.8,6.4 H10.6 M.8,9.8 H10.6" stroke="#4a9a8a" stroke-width=".6"/></svg>
<i class="dd" style="left:959.8px;top:37.4px;border-top-color:#1c1c28"></i>
<i class="grip" style="left:3.8000000000000003px;top:49.3px;height:10.700000000000003px;background:repeating-linear-gradient(180deg,#20202e 0 1.2px,transparent 1.2px 2.9px);width:1.5px"></i>
<svg class="ico" style="left:8.2px;top:48.8px;width:13.6px;height:13px" viewBox="0 0 14 14" preserveAspectRatio="none"><rect x=".6" y=".8" width="12.8" height="12.2" rx="1" fill="#dbe8f8" stroke="#2b4d8c" stroke-width="1"/><rect x="1.1" y="1.3" width="11.8" height="2.6" fill="#3f6fb8"/><rect x="1.8" y="6.2" width="4.6" height="5.3" fill="#7fb0e8" stroke="#2b4d8c" stroke-width=".7"/><rect x="7.6" y="6.2" width="4.6" height="5.3" fill="#7fb0e8" stroke="#2b4d8c" stroke-width=".7"/><path d="M1.5,5 H12.5" stroke="#9cb4d8" stroke-width=".6"/></svg>
<svg class="ico" style="left:27.4px;top:49.4px;width:13.4px;height:12.4px" viewBox="0 0 14 14" preserveAspectRatio="none"><rect x=".6" y="1.5" width="12.8" height="11.5" rx="1" fill="#f2f6fc" stroke="#2b4d8c" stroke-width="1"/><rect x="1.1" y="2" width="11.8" height="2.3" fill="#3f6fb8"/><rect x="4.8" y="4.3" width="3.2" height="8.2" fill="#e46a18"/><path d="M1,6.8 H13 M1,9.5 H13 M4.8,4 V12.5 M8,4 V12.5" stroke="#56749e" stroke-width=".7"/></svg>
<svg class="ico" style="left:46.8px;top:48.8px;width:13.4px;height:13px" viewBox="0 0 14 14" preserveAspectRatio="none"><rect x=".6" y="1" width="12.8" height="12" rx="1" fill="#f2f6fc" stroke="#2b4d8c" stroke-width="1"/><rect x="1.1" y="1.5" width="11.8" height="2.6" fill="#3f6fb8"/><path d="M1,6.5 H13 M1,9.5 H13 M5,4 V12.5 M9,4 V12.5" stroke="#56749e" stroke-width=".8"/><rect x="1.1" y="6.9" width="3.5" height="2.2" fill="#a8c8ee"/><rect x="9.4" y="6.9" width="3.5" height="2.2" fill="#a8c8ee"/></svg>
<svg class="ico" style="left:66.2px;top:49.4px;width:13px;height:12.4px" viewBox="0 0 14 14" preserveAspectRatio="none"><rect x=".6" y="1.5" width="12.8" height="11.5" rx="1" fill="#e8eefa" stroke="#2b4d8c" stroke-width="1"/><rect x="1.1" y="2" width="11.8" height="2.2" fill="#3f6fb8"/><rect x="1.1" y="7.4" width="11.8" height="2.4" fill="#5648c8"/><path d="M1,6.8 H13 M1,10.2 H13 M5,4 V12.5 M9,4 V12.5" stroke="#56749e" stroke-width=".7"/></svg>
<svg class="ico" style="left:85.6px;top:48.8px;width:14px;height:13.2px" viewBox="0 0 14 14" preserveAspectRatio="none"><rect x="2" y=".6" width="10" height="12.8" rx="1" fill="#8fb8e6" stroke="#2b4d8c" stroke-width="1"/><rect x="3.3" y="2" width="7.4" height="2.8" fill="#58d058" stroke="#2a7a3a" stroke-width=".5"/><path d="M3.6,6.6 H10.4 M3.6,8.7 H10.4 M3.6,10.8 H10.4" stroke="#27508e" stroke-width="1.2" stroke-dasharray="1.6 1"/></svg>
<i class="vsep" style="left:103.6px;top:46.4px;height:18.4px;background:#7468c8;width:1.4px"></i>
<svg class="ico" style="left:110px;top:48.8px;width:12.4px;height:13px" viewBox="0 0 14 14" preserveAspectRatio="none"><path d="M1.5,13.2 Q1.5,8.6 7,8.6 Q12.5,8.6 12.5,13.2 Z" fill="#7a3fd6" stroke="#5a28b0" stroke-width=".6"/><ellipse cx="7" cy="4.8" rx="3.3" ry="4" fill="#fdeecb" stroke="#c59a58" stroke-width=".8"/></svg>
<svg class="ico" style="left:128px;top:48.4px;width:14.6px;height:13.8px" viewBox="0 0 14 14" preserveAspectRatio="none"><rect x=".6" y=".6" width="12.8" height="12.8" rx="1" fill="#6f96cc" stroke="#2b4d8c" stroke-width="1"/><rect x="1.2" y="1.2" width="11.6" height="2" fill="#2f5ca6"/><rect x="1.6" y="3.8" width="10.8" height="6" fill="#fbf4e6"/><rect x="1.6" y="3.8" width="10.8" height="6" fill="url(#bchk)"/><path d="M2.5,11.6 H11.5" stroke="#dfe8f6" stroke-width="1" stroke-dasharray="1 1"/></svg>
<svg class="ico" style="left:149px;top:49.199999999999996px;width:13.4px;height:12.6px" viewBox="0 0 14 14" preserveAspectRatio="none"><path d="M3,1 L5,9.5 H1 Z" fill="#f06070" stroke="#c03040" stroke-width=".5"/><path d="M7,3.5 L10,2 L13.3,3.5 V8.5 L10,10.2 L7,8.5 Z" fill="#38c838" stroke="#1e8a2a" stroke-width=".6"/><circle cx="5.2" cy="10.3" r="2.9" fill="url(#gs)" stroke="#2a60b0" stroke-width=".6"/></svg>
<svg class="ico" style="left:167.6px;top:48.8px;width:13.4px;height:13.2px" viewBox="0 0 14 14" preserveAspectRatio="none"><rect x=".7" y=".7" width="12.6" height="12.6" rx="1" fill="#2f62b0" stroke="#1f3f7a" stroke-width="1"/><rect x="1.8" y="3.2" width="10.4" height="9" fill="#e6f0fc"/><rect x="4.2" y="4.2" width="5.6" height="7" fill="#8ab8ea" stroke="#2a5aa0" stroke-width=".7"/><path d="M2,7.7 H4.2 M9.8,7.7 H12" stroke="#2a5aa0" stroke-width=".8"/></svg>
<i class="vsep" style="left:184.70000000000002px;top:46.4px;height:18.4px;background:#7468c8;width:1.4px"></i>
<i class="abs" style="left:188.3px;top:46.4px;width:19.5px;height:19.000000000000007px;background:#fde1d2;box-shadow:inset 0 0 0 1px #fbd0b4"></i>
<svg class="ico" style="left:190.8px;top:48.199999999999996px;width:13.6px;height:13.8px" viewBox="0 0 14 14" preserveAspectRatio="none"><rect x="1.6" y=".6" width="3" height="12.8" fill="#a8c6ec" stroke="#2a5aa0" stroke-width=".9"/><path d="M1.8,3 H3.2 M1.8,5.5 H3.2 M1.8,8 H3.2 M1.8,10.5 H3.2" stroke="#2a5aa0" stroke-width=".6"/><path d="M6,4.2 L13.3,13.2 H6 Z" fill="#b8d2f2" stroke="#2a5aa0" stroke-width="1"/><path d="M7.8,9 L10.3,11.8 H7.8 Z" fill="#eef4fc" stroke="#2a5aa0" stroke-width=".6"/></svg>
<i class="vsep" style="left:208.60000000000002px;top:46.4px;height:18.4px;background:#7468c8;width:1.4px"></i>
<svg class="ico" style="left:215.6px;top:49.199999999999996px;width:12.6px;height:12.8px" viewBox="0 0 14 14" preserveAspectRatio="none"><path d="M1,1 H8 L12.5,5 V13 H1 Z" fill="url(#pchk)" stroke="#7268cc" stroke-width=".9"/><path d="M7,1 H8 L12.5,5 V13 H7 Z" fill="#dedaf7" stroke="#7268cc" stroke-width=".7"/></svg>
<svg class="ico" style="left:234.2px;top:48.8px;width:13.8px;height:13.4px" viewBox="0 0 14 14" preserveAspectRatio="none"><path d="M1,1 H9 L13,4.5 V13 H1 Z" fill="url(#pchk)" stroke="#7268cc" stroke-width=".9" stroke-dasharray="1.5 1"/><path d="M3,2.5 H8.5 L11.5,5.2 V11.5 H3 Z" fill="url(#pchk)" stroke="#7268cc" stroke-width=".6"/></svg>
<svg class="ico" style="left:254px;top:49.199999999999996px;width:12px;height:12.8px" viewBox="0 0 14 14" preserveAspectRatio="none"><path d="M2,1.5 H8 L12,5 V13 H2 Z" fill="url(#pchk)" stroke="#7268cc" stroke-width=".9"/></svg>
<svg class="ico" style="left:273.6px;top:49.199999999999996px;width:12px;height:12.6px" viewBox="0 0 14 14" preserveAspectRatio="none"><path d="M1.2,1 H8.5 L12.8,4.8 V13 H1.2 Z" fill="none" stroke="#7268cc" stroke-width=".9" stroke-dasharray="1.3 1.1"/><path d="M2.8,2.8 H7.6 L10.8,5.6 V11.2 H2.8 Z" fill="#dedaf7" stroke="#7268cc" stroke-width=".7"/></svg>
<i class="dd" style="left:291.6px;top:59.8px;border-top-color:#1c1c28"></i>
<i class="grip" style="left:456.9px;top:49.5px;height:10.5px;background:repeating-linear-gradient(180deg,#20202e 0 1.2px,transparent 1.2px 2.9px);width:1.5px"></i>
<svg class="ico" style="left:461.0px;top:48px;width:14.6px;height:13.4px" viewBox="0 0 14 14" preserveAspectRatio="none"><path d="M4,1.6 Q8,.4 12.4,1.4 V12 Q9.4,13.8 7.6,12.2 Q6,13.8 3.4,12.6 V8 Z" fill="#f0f6fe" stroke="#2f6ac0" stroke-width="1"/><path d="M9.6,1.2 V12.4" stroke="#8ab4ea" stroke-width="1.6"/><path d="M.8,.8 L6.4,6.4 M6.4,.8 L.8,6.4" stroke="#c8141e" stroke-width="1.9"/></svg>
<i class="dd" style="left:480.0px;top:54.0px;border-top-color:#1c1c28"></i>
<svg class="ico" style="left:489.0px;top:48px;width:14.0px;height:13.4px" viewBox="0 0 14 14" preserveAspectRatio="none"><rect x=".7" y=".7" width="9.4" height="12.6" fill="#dedaf7" stroke="#7268cc" stroke-width=".9"/><path d="M10.1,1.4 L13.3,.8 V12.4 L10.1,13.2" fill="#cfcaf2" stroke="#7268cc" stroke-width=".8"/><circle cx="5.2" cy="5.6" r="2.5" fill="#ebe8fb" stroke="#7268cc" stroke-width=".8"/><path d="M1.6,13 Q1.6,8.8 5.2,8.8 Q8.8,8.8 8.8,13 Z" fill="#9990e0" stroke="#7268cc" stroke-width=".6"/></svg>
<svg class="ico" style="left:508.2px;top:48px;width:14.0px;height:13.4px" viewBox="0 0 14 14" preserveAspectRatio="none"><rect x=".7" y=".7" width="12.6" height="12.6" rx="1.4" fill="#dedaf7" stroke="#7268cc" stroke-width="1"/><path d="M3.4,2.8 L11.6,7 L3.4,11.2 Z" fill="#9990e0" stroke="#7268cc" stroke-width=".8"/></svg>
<i class="vsep" style="left:526.5px;top:46px;height:19px;background:#7468c8;width:1.4px"></i>
<svg class="ico" style="left:532.0px;top:48px;width:14.2px;height:13.4px" viewBox="0 0 14 14" preserveAspectRatio="none"><path d="M2.6,2.6 V11.4 Q6,13.8 9.4,11.4 V2.6 Z" fill="url(#gc)" stroke="#1f4a94" stroke-width=".9"/><ellipse cx="6" cy="2.6" rx="3.4" ry="1.7" fill="#c8e0fa" stroke="#1f4a94" stroke-width=".9"/><path d="M.6,2.4 H2.4 M9.6,2.4 H11.4 M.6,11.8 H2.4 M9.6,11.8 H11.4" stroke="#1f4a94" stroke-width=".9"/><path d="M9.6,7.4 Q11.4,8.6 13.6,6.8" stroke="#5a9ae0" stroke-width=".8" fill="none"/></svg>
<svg class="ico" style="left:551.0px;top:47.7px;width:14.6px;height:14px" viewBox="0 0 14 14" preserveAspectRatio="none"><rect x=".7" y=".7" width="12.6" height="12.6" fill="#d6d0f2" stroke="#7268cc" stroke-width=".8" stroke-dasharray="1.4 1"/><path d="M3.8,3 V11 Q7,13 10.2,11 V3 Z" fill="#c4bdec" stroke="#7268cc" stroke-width=".7"/><ellipse cx="7" cy="3" rx="3.2" ry="1.4" fill="#dedaf7" stroke="#7268cc" stroke-width=".7"/></svg>
<svg class="ico" style="left:571.0px;top:47.4px;width:14.4px;height:14px" viewBox="0 0 14 14" preserveAspectRatio="none"><rect x=".8" y="5.2" width="8.4" height="8.2" fill="#fbf4e6" stroke="#6a3a1a" stroke-width=".7"/><rect x="1.2" y="5.6" width="7.6" height="7.4" fill="url(#bchk)"/><path d="M7.2,2.6 H10 V.6 L13.6,3.6 L10,6.6 V4.6 H7.2 Z" fill="#2fb84a" stroke="#137a2a" stroke-width=".6"/></svg>
<i class="vsep" style="left:588.5px;top:46px;height:19px;background:#7468c8;width:1.4px"></i>
<i class="abs" style="left:592.2px;top:46.2px;width:19.199999999999932px;height:19.0px;background:#fde1d2;box-shadow:inset 0 0 0 1px #fbd0b4"></i>
<svg class="ico" style="left:595.0px;top:47.8px;width:14.2px;height:13.8px" viewBox="0 0 14 14" preserveAspectRatio="none"><path d="M.6,13.2 Q.6,8.8 4.6,8.8 Q8.6,8.8 8.6,13.2 Z" fill="#7a3fd6" stroke="#5a28b0" stroke-width=".5"/><ellipse cx="4.6" cy="5.6" rx="2.9" ry="3.4" fill="#fdeecb" stroke="#c59a58" stroke-width=".8"/><path d="M9,.8 Q8.2,3.4 10,4.4 V6.4 H12 V4.4 Q13.8,3.4 13,.8 L12,2.6 H10 Z" fill="#f0f4fa" stroke="#3a4a7a" stroke-width=".7"/><rect x="9.6" y="6.4" width="2.8" height="7" rx=".8" fill="#3f56c0" stroke="#1f2a7a" stroke-width=".6"/></svg>
<i class="dd" style="left:613.0px;top:54.0px;border-top-color:#1c1c28"></i>
<svg class="ico" style="left:623.2px;top:48.2px;width:13.0px;height:13px" viewBox="0 0 14 14" preserveAspectRatio="none"><path d="M7,.8 V8 L1.2,12.4 M7,8 L12.8,12.4" fill="none" stroke="#1f8a2a" stroke-width="1.5" stroke-linecap="round"/></svg>
<i class="dd" style="left:640.6px;top:54.0px;border-top-color:#1c1c28"></i>
<svg class="ico" style="left:651.0px;top:48px;width:13.4px;height:13.6px" viewBox="0 0 14 14" preserveAspectRatio="none"><rect x=".8" y=".7" width="10.4" height="12.6" rx="1" fill="#f2f6fe" stroke="#1f3f8a" stroke-width="1.1"/><rect x="1.3" y="1.2" width="9.4" height="2.4" fill="#2f66c0"/><rect x="1.3" y="8.8" width="9.4" height="2" fill="#5a48c8"/><rect x="1.3" y="10.8" width="9.4" height="2" fill="#2a2a5a"/><path d="M8.6,10.8 H13.4 M11.6,9 Q13.8,10.8 11.6,12.8" stroke="#2f5aa8" stroke-width="1" fill="none"/></svg>
<i class="dd" style="left:668.2px;top:54.0px;border-top-color:#1c1c28"></i>
<svg class="ico" style="left:677.4px;top:47.8px;width:14.2px;height:13.8px" viewBox="0 0 14 14" preserveAspectRatio="none"><path d="M.7,12.6 V1.6 H4.6 L5.8,3.2 H9 V5.4" fill="#a8c8f0" stroke="#2456a8" stroke-width=".9"/><path d="M2.8,5.4 H12 L10,12.6 H.7 Z" fill="url(#gw)" stroke="#2456a8" stroke-width=".9"/><path d="M6.2,13.4 Q6.2,9.8 9.8,9.8 Q13.4,9.8 13.4,13.4 Z" fill="#7a3fd6" stroke="#5a28b0" stroke-width=".5"/><ellipse cx="9.8" cy="6.6" rx="2.6" ry="3.2" fill="#fdeecb" stroke="#c59a58" stroke-width=".8"/></svg>
<i class="dd" style="left:695.6px;top:54.0px;border-top-color:#1c1c28"></i>
<svg class="ico" style="left:705.0px;top:47.6px;width:14.4px;height:14px" viewBox="0 0 14 14" preserveAspectRatio="none"><rect x=".8" y="6" width="12.4" height="7.4" fill="url(#gk)" stroke="#123a7a" stroke-width=".7"/><path d="M.8,6 H13.2 V8 H.8 Z" fill="#143c84"/><path d="M2,8 L3.4,6 M5,8 L6.4,6 M8,8 L9.4,6 M11,8 L12.4,6" stroke="#eef4fc" stroke-width="1.2"/><path d="M.6,5.4 L12.4,.8 L13.2,2.8 L1.4,7.2 Z" fill="#143c84" stroke="#0e2a60" stroke-width=".5"/><path d="M3.2,4.4 L4.6,5.8 M6.2,3.2 L7.6,4.6 M9.2,2 L10.6,3.4" stroke="#eef4fc" stroke-width="1.2"/></svg>
<svg class="ico" style="left:725.0px;top:47.8px;width:13.6px;height:13.8px" viewBox="0 0 14 14" preserveAspectRatio="none"><path d="M.8,.8 H9.4 L13.2,4 V13.2 H.8 Z" fill="#dedaf7" stroke="#7268cc" stroke-width=".9"/><path d="M2.2,2.2 V12" stroke="#7268cc" stroke-width=".8" stroke-dasharray=".8 .8"/><circle cx="7.4" cy="7.4" r="3.4" fill="#ebe8fb" stroke="#7268cc" stroke-width=".9"/><circle cx="7.4" cy="7.4" r="1.3" fill="#9990e0" stroke="#7268cc" stroke-width=".6"/><path d="M9.6,10 L12.4,13" stroke="#7268cc" stroke-width="1.2"/></svg>
<svg class="ico" style="left:746.0px;top:47.6px;width:12.6px;height:14px" viewBox="0 0 14 14" preserveAspectRatio="none"><rect x="1" y=".4" width="12" height="13.2" fill="#f0d6d2" opacity=".8"/><text x="7" y="13" font-family="Liberation Serif" font-weight="bold" font-size="17.5" text-anchor="middle" fill="url(#gt)" stroke="#1c4c98" stroke-width=".3">T</text></svg>
<svg class="ico" style="left:763.6px;top:47.2px;width:13.6px;height:14.6px" viewBox="0 0 14 14" preserveAspectRatio="none"><text transform="scale(1.5,1)" x="4.5" y="13" font-family="Liberation Serif" font-weight="bold" font-style="italic" font-size="19" text-anchor="middle" fill="#1e8a4a" stroke="#1e8a4a" stroke-width=".3">i</text></svg>
<svg class="ico" style="left:781.4px;top:47.8px;width:14.6px;height:13.6px" viewBox="0 0 14 14" preserveAspectRatio="none"><path d="M1,11.4 Q.4,8 3,6.6 L9.4,1.6 Q12.6,.2 13.4,2 Q13.6,3.2 11.6,4.4 L13,5.2 Q12.6,9 9,10.4 Q6,11.4 3.4,13 Z" fill="#dedaf7" stroke="#7268cc" stroke-width=".8"/><path d="M6,8.6 Q8,6.4 10.6,6 M3,10 Q4,8 6,8.6" fill="none" stroke="#7268cc" stroke-width=".8"/><circle cx="5.8" cy="9.6" r="1.2" fill="#9990e0" stroke="#7268cc" stroke-width=".5"/></svg>
<i class="dd" style="left:801.3px;top:60.0px;border-top-color:#1c1c28"></i>
<!--LEFT-->
<div id="lp" class="abs">
<div id="lphead" class="abs"></div>
<div id="tabs" class="abs"></div>
<span class="t " style="left:6px;top:5.05px;font-size:9.5px;transform:scaleX(1.021);color:#1c1c30">Morph</span>
<svg class="abs" style="left:271px;top:5px;width:22px;height:10px" viewBox="0 0 22 10"><path d="M3.2,1 H6.6 M3.8,1 V5.4 M6,1 V5.4 M2.4,5.6 H7.4 M4.9,5.6 V9" stroke="#101018" stroke-width=".9" fill="none"/><path d="M6,1 V5.4" stroke="#101018" stroke-width="1.4"/><path d="M15.4,2 L20.8,7.6 M20.8,2 L15.4,7.6" stroke="#101018" stroke-width="1.3"/></svg>
<div class="tab" style="left:-1px;width:40.5px;background:linear-gradient(180deg,#d6d0f8,#b8aeee);top:20.8px;height:15.4px;border-bottom:1px solid #5a52b6;"></div>
<span class="t " style="left:1.5px;top:23.80px;font-size:9.6px;transform:scaleX(1.013);z-index:3;color:#20202c">Toolbox</span>
<div class="tab" style="left:38.5px;width:71.0px;background:linear-gradient(180deg,#fdf0c0,#fbd890);top:20.8px;height:15.4px;border-bottom:1px solid #5a52b6;"></div>
<span class="t " style="left:42.5px;top:23.80px;font-size:9.6px;transform:scaleX(0.945);z-index:3;color:#20202c">Pieces Window</span>
<div class="tab" style="left:108.5px;width:65.0px;background:linear-gradient(180deg,#f8d0d4,#f0a8b0);top:20.8px;height:15.4px;border-bottom:1px solid #5a52b6;"></div>
<span class="t " style="left:112.5px;top:23.80px;font-size:9.6px;transform:scaleX(0.955);z-index:3;color:#20202c">3D Properties</span>
<div class="tab" style="left:172.5px;width:38.0px;background:linear-gradient(180deg,#fde4cc,#f8b888);top:20.8px;height:15.4px;border-bottom:1px solid #5a52b6;top:20.2px;height:16.6px;border-color:#f4b078;border-bottom:none;z-index:2;"></div>
<span class="t " style="left:176.8px;top:23.80px;font-size:9.6px;transform:scaleX(0.996);font-weight:bold;z-index:3;color:#20202c">Morph</span>
<div class="tab" style="left:209.5px;width:38.5px;background:linear-gradient(180deg,#e2eed8,#c4d8b4);top:20.8px;height:15.4px;border-bottom:1px solid #5a52b6;"></div>
<span class="t " style="left:214px;top:23.80px;font-size:9.6px;transform:scaleX(0.937);z-index:3;color:#20202c">Shader</span>
<div class="abs" style="left:0;top:35.2px;width:299px;height:1px;background:#6a62c2"></div>
<div class="abs" style="left:0;top:37px;width:299px;height:2px;background:linear-gradient(180deg,#8e8e92,#c4c4c6)"></div>
<div class="abs" style="left:-1px;top:47.400000000000006px;width:94px;height:200.6px;background:#e6e6e6;border:1px solid #a8a8ac;box-sizing:content-box"></div>
<svg class="abs" style="left:1px;top:49.599999999999994px;width:12.6px;height:10.6px" viewBox="0 0 13 11"><path d="M.6,9.6 V1.4 H4.4 L5.4,2.6 H10.4 V4" fill="#f4ec70" stroke="#6a6a30" stroke-width=".8"/><path d="M2.4,4 H12.4 L10.6,10 H.6 Z" fill="#fbf6a0" stroke="#55552a" stroke-width=".8"/><path d="M10.8,10.4 H1.2" stroke="#303020" stroke-width="1"/></svg>
<span class="t tr" style="left:16.4px;top:51.50px;font-size:9px;transform:scaleX(0.886);">Morphs</span>
<svg class="abs" style="left:16.6px;top:63.19999999999999px;width:9px;height:9px" viewBox="0 0 9 9"><path d="M.8,3.3 H4 V.9 L8.2,4.5 L4,8.1 V5.7 H.8 Z" fill="#4a4a4a" stroke="#161616" stroke-width=".9"/><path d="M2,4.5 H5.6" stroke="#d8d8d8" stroke-width=".9"/></svg>
<div class="abs" style="left:30px;top:61.80000000000001px;width:35.4px;height:12.2px;background:#3399ff"></div>
<span class="t tr" style="left:31.6px;top:63.50px;font-size:9px;transform:scaleX(0.913);color:#fff">Advance</span>
<span class="t tr" style="left:30.8px;top:75.70px;font-size:9px;transform:scaleX(0.918);">Heights</span>
<span class="t tr" style="left:30.8px;top:88.00px;font-size:9px;transform:scaleX(0.877);">Pose</span>
<span class="t tr" style="left:30.8px;top:100.30px;font-size:9px;transform:scaleX(0.899);">Shape</span>
<span class="t tr" style="left:30.8px;top:112.60px;font-size:9px;transform:scaleX(0.881);">Basic</span>
<svg class="abs" style="left:30px;top:133px;width:40px;height:100px" viewBox="30 200 40 100"><path d="M53.4,293.8 L43.6,212" stroke="#f01414" stroke-width="1.9" fill="none"/><path d="M42.4,203 L39.2,216.4 L47.8,215.4 Z" fill="#f01414"/></svg>
<div class="abs" style="left:97.4px;top:46.900000000000006px;width:186px;height:177.64000000000001px;background:#ececec;border-top:1px solid #a2a2a2;box-sizing:border-box"></div>
<div class="abs" style="left:97.4px;top:46.900000000000006px;width:10.8px;height:177.64000000000001px;background:#707070"></div>
<i class="exp" style="top:51.1px;left:99.0px"></i>
<span class="t gt" style="left:110.6px;top:49.76px;font-size:9.8px;transform:scaleX(0.931);">Shoulder Slope</span>
<span class="t gt" style="left:184.6px;top:49.76px;font-size:9.8px;transform:scaleX(0.837);">3,2</span>
<div class="abs" style="left:121px;top:63.380000000000024px;width:60.2px;height:12px;overflow:hidden"><span class="t gt" style="left:0.6px;top:1.10px;font-size:9.8px;transform:scaleX(0.931);">Shoulder Slope</span></div>
<i class="sl" style="left:187.6px;top:66.4px"></i>
<i class="slt" style="left:225.4px;top:65.0px"></i>
<i class="tick" style="left:188.4px;top:73.0px"></i><i class="tick" style="left:263.2px;top:73.0px"></i>
<i class="exp" style="top:80.5px;left:99.0px"></i>
<span class="t gt" style="left:110.6px;top:79.20px;font-size:9.8px;transform:scaleX(0.868);">High Hip</span>
<span class="t gt" style="left:184.6px;top:79.20px;font-size:9.8px;transform:scaleX(0.856);">87,51</span>
<span class="t gt" style="left:121.6px;top:93.92px;font-size:9.8px;transform:scaleX(0.868);">High Hip</span>
<i class="sl" style="left:187.6px;top:95.8px"></i>
<i class="slt" style="left:225.4px;top:94.4px"></i>
<i class="tick" style="left:188.4px;top:102.4px"></i><i class="tick" style="left:263.2px;top:102.4px"></i>
<i class="exp" style="top:109.9px;left:99.0px"></i>
<span class="t gt" style="left:110.6px;top:108.64px;font-size:9.8px;transform:scaleX(0.979);">Thigh</span>
<span class="t gt" style="left:184.6px;top:108.64px;font-size:9.8px;transform:scaleX(0.860);">53,8</span>
<span class="t gt" style="left:121.6px;top:123.36px;font-size:9.8px;transform:scaleX(0.979);">Thigh</span>
<i class="sl" style="left:187.6px;top:125.3px"></i>
<i class="slt" style="left:225.4px;top:123.9px"></i>
<i class="tick" style="left:188.4px;top:131.9px"></i><i class="tick" style="left:263.2px;top:131.9px"></i>
<i class="exp" style="top:139.4px;left:99.0px"></i>
<span class="t gt" style="left:110.6px;top:138.08px;font-size:9.8px;transform:scaleX(0.987);">Knee</span>
<span class="t gt" style="left:184.6px;top:138.08px;font-size:9.8px;transform:scaleX(0.860);">35,5</span>
<span class="t gt" style="left:121.6px;top:152.80px;font-size:9.8px;transform:scaleX(0.987);">Knee</span>
<i class="sl" style="left:187.6px;top:154.7px"></i>
<i class="slt" style="left:225.4px;top:153.3px"></i>
<i class="tick" style="left:188.4px;top:161.3px"></i><i class="tick" style="left:263.2px;top:161.3px"></i>
<i class="exp" style="top:168.8px;left:99.0px"></i>
<span class="t gt" style="left:110.6px;top:167.52px;font-size:9.8px;transform:scaleX(0.968);">Low Thigh</span>
<span class="t gt" style="left:184.6px;top:167.52px;font-size:9.8px;transform:scaleX(0.897);">44,85</span>
<span class="t gt" style="left:121.6px;top:182.24px;font-size:9.8px;transform:scaleX(0.968);">Low Thigh</span>
<i class="sl" style="left:187.6px;top:184.1px"></i>
<i class="slt" style="left:225.4px;top:182.7px"></i>
<i class="tick" style="left:188.4px;top:190.7px"></i><i class="tick" style="left:263.2px;top:190.7px"></i>
<i class="exp" style="top:198.3px;left:99.0px"></i>
<span class="t gt" style="left:110.6px;top:196.96px;font-size:9.8px;transform:scaleX(0.952);">Calf</span>
<span class="t gt" style="left:184.6px;top:196.96px;font-size:9.8px;transform:scaleX(0.856);">35,13</span>
<span class="t gt" style="left:121.6px;top:211.68px;font-size:9.8px;transform:scaleX(0.952);">Calf</span>
<i class="sl" style="left:187.6px;top:213.6px"></i>
<i class="slt" style="left:225.4px;top:212.2px"></i>
<i class="tick" style="left:188.4px;top:220.2px"></i><i class="tick" style="left:263.2px;top:220.2px"></i>
<i class="abs" style="left:108.2px;top:61px;width:161.4px;height:1px;background:#929292"></i>
<i class="abs" style="left:108.2px;top:76px;width:161.4px;height:1px;background:#929292"></i>
<i class="abs" style="left:108.2px;top:91px;width:161.4px;height:1px;background:#929292"></i>
<i class="abs" style="left:108.2px;top:105px;width:161.4px;height:1px;background:#929292"></i>
<i class="abs" style="left:108.2px;top:120px;width:161.4px;height:1px;background:#929292"></i>
<i class="abs" style="left:108.2px;top:135px;width:161.4px;height:1px;background:#929292"></i>
<i class="abs" style="left:108.2px;top:150px;width:161.4px;height:1px;background:#929292"></i>
<i class="abs" style="left:108.2px;top:164px;width:161.4px;height:1px;background:#929292"></i>
<i class="abs" style="left:108.2px;top:179px;width:161.4px;height:1px;background:#929292"></i>
<i class="abs" style="left:108.2px;top:194px;width:161.4px;height:1px;background:#929292"></i>
<i class="abs" style="left:108.2px;top:209px;width:161.4px;height:1px;background:#929292"></i>
<i class="abs" style="left:108.2px;top:223px;width:161.4px;height:1px;background:#929292"></i>
<i class="abs" style="left:181px;top:46.900000000000006px;width:1.1px;height:176.64000000000001px;background:#8e8e8e"></i>
<div class="abs" style="left:269.8px;top:47.5px;width:13.6px;height:176.64000000000001px;background:#ededed"></div>
<i class="abs" style="left:271.0px;top:61.599999999999994px;width:11.6px;height:57px;border-radius:2px;border:1px solid #a8a8a8;box-sizing:border-box;background:linear-gradient(90deg,#f2f2f2,#d4d4d4 60%,#c4c4c4)"></i>
<i class="abs" style="left:274.0px;top:87.4px;width:5.6px;height:6px;background:repeating-linear-gradient(180deg,#707070 0 1px,transparent 1px 2px)"></i>
<i class="abs" style="left:273.5px;top:53.05px;width:0;height:0;border-left:3.1px solid transparent;border-right:3.1px solid transparent;border-bottom:3.1px solid #404040"></i>
<i class="abs" style="left:273.7px;top:215.84999999999997px;width:0;height:0;border-left:3.1px solid transparent;border-right:3.1px solid transparent;border-top:3.1px solid #404040"></i>
<div class="abs" style="left:97.4px;top:226.39999999999998px;width:186px;height:23.4px;background:#e9e9e9;border:1px solid #a8a8ac;box-sizing:border-box"></div>
<div class="abs" style="left:284px;top:39px;width:13px;height:426px;background:#eeeeee"></div>
<i class="abs" style="left:284.8px;top:53.400000000000006px;width:11.6px;height:347px;border-radius:2px;border:1px solid #a4a4a4;box-sizing:border-box;background:linear-gradient(90deg,#f4f4f4,#d6d6d6 55%,#c2c2c2)"></i>
<i class="abs" style="left:288px;top:224.39999999999998px;width:5.6px;height:6px;background:repeating-linear-gradient(180deg,#707070 0 1px,transparent 1px 2px)"></i>
<i class="abs" style="left:287.7px;top:44.05px;width:0;height:0;border-left:3.1px solid transparent;border-right:3.1px solid transparent;border-bottom:3.1px solid #404040"></i>
<i class="abs" style="left:287.7px;top:454.84999999999997px;width:0;height:0;border-left:3.1px solid transparent;border-right:3.1px solid transparent;border-top:3.1px solid #404040"></i>
<div class="abs" style="left:2px;top:257.6px;width:152px;height:26px;box-sizing:border-box;background:#f0f0f0;border:1px solid;border-color:#a2a2a2 #fdfdfd #fdfdfd #a2a2a2;box-shadow:inset 1px 1px 0 #d2d2d2"></div>
<div class="abs" style="left:4px;top:260px;width:146px;height:12px;overflow:hidden"><span class="t f9 dn" style="left:2px;top:1.30px;font-size:9px;transform:scaleX(0.882);">Name: Eva&nbsp; Size: 8(US)&nbsp;&nbsp; Paramatric: Yes</span></div>
<div class="abs" style="left:2.4px;top:294.6px;width:58.6px;height:74px;box-sizing:border-box;border:1px solid #dcdce4;border-radius:3px;box-shadow:inset 0 0 0 1px #f8f8fc"></div>
<div class="abs" style="left:6.4px;top:290px;width:29.4px;height:10px;background:#f0f0f0"></div>
<span class="t f9 dn" style="left:8px;top:290.70px;font-size:9px;transform:scaleX(0.894);">Display</span>
<i class="cb" style="left:3.4px;top:307px"></i>
<span class="t f9 dn" style="left:14.8px;top:307.50px;font-size:9px;transform:scaleX(0.897);">Full display</span>
<i class="cb" style="left:3.4px;top:325.4px"></i>
<span class="t f9 dn" style="left:14.8px;top:325.90px;font-size:9px;transform:scaleX(0.898);">All display</span>
<i class="btn" style="left:4px;top:344.2px;width:55.8px;height:15.8px"></i>
<span class="t f9 dn" style="left:7.2px;top:348.10px;font-size:9px;transform:scaleX(0.897);">Clear Display</span>
<i class="btn" style="left:-2px;top:388.2px;width:57.6px;height:15.6px"></i>
<span class="t f9 dn" style="left:1px;top:391.90px;font-size:9px;transform:scaleX(0.870);">Place measure</span>
<i class="btn" style="left:59.4px;top:388.2px;width:39.6px;height:15.6px"></i>
<span class="t f9 dn" style="left:64.4px;top:391.90px;font-size:9px;transform:scaleX(0.914);">Restore</span>
<i class="btn" style="left:101.4px;top:388.2px;width:49.2px;height:15.6px"></i>
<span class="t f9 dn" style="left:105.6px;top:391.90px;font-size:9px;transform:scaleX(0.919);">Restore All</span>
</div>
<!--CANVAS-->
<div class="abs" style="left:298.6px;top:67px;width:3.2px;height:466px;background:linear-gradient(90deg,#d6d2fc,#e2e0ff)"></div>
<div id="ruler" class="abs"></div>
<div id="canvas" class="abs"></div>
<svg class="abs" style="left:302px;top:67px;width:266px;height:466px" viewBox="302 67 266 466">
<path d="M314.8,76.6 V78.8 M320.8,76.6 V78.8 M326.8,76.6 V78.8 M332.8,76.6 V78.8 M344.8,76.6 V78.8 M350.8,76.6 V78.8 M356.8,76.6 V78.8 M362.8,76.6 V78.8 M374.8,76.6 V78.8 M380.8,76.6 V78.8 M386.8,76.6 V78.8 M392.8,76.6 V78.8 M404.8,76.6 V78.8 M410.8,76.6 V78.8 M416.8,76.6 V78.8 M422.8,76.6 V78.8 M434.8,76.6 V78.8 M440.8,76.6 V78.8 M446.8,76.6 V78.8 M452.8,76.6 V78.8 M464.8,76.6 V78.8 M470.8,76.6 V78.8 M476.8,76.6 V78.8 M482.8,76.6 V78.8 M494.8,76.6 V78.8 M500.8,76.6 V78.8 M506.8,76.6 V78.8 M512.8,76.6 V78.8 M524.8,76.6 V78.8 M530.8,76.6 V78.8 M536.8,76.6 V78.8 M542.8,76.6 V78.8 M554.8,76.6 V78.8 M560.8,76.6 V78.8 M566.8,76.6 V78.8 M311.0,84.4 H313.2 M311.0,90.4 H313.2 M311.0,96.4 H313.2 M311.0,102.4 H313.2 M311.0,114.4 H313.2 M311.0,120.4 H313.2 M311.0,126.3 H313.2 M311.0,132.3 H313.2 M311.0,144.3 H313.2 M311.0,150.3 H313.2 M311.0,156.3 H313.2 M311.0,162.3 H313.2 M311.0,174.2 H313.2 M311.0,180.2 H313.2 M311.0,186.2 H313.2 M311.0,192.2 H313.2 M311.0,204.2 H313.2 M311.0,210.2 H313.2 M311.0,216.1 H313.2 M311.0,222.1 H313.2 M311.0,234.1 H313.2 M311.0,240.1 H313.2 M311.0,246.1 H313.2 M311.0,252.1 H313.2 M311.0,264.0 H313.2 M311.0,270.0 H313.2 M311.0,276.0 H313.2 M311.0,282.0 H313.2 M311.0,294.0 H313.2 M311.0,299.9 H313.2 M311.0,305.9 H313.2 M311.0,311.9 H313.2 M311.0,323.9 H313.2 M311.0,329.9 H313.2 M311.0,335.9 H313.2 M311.0,341.8 H313.2 M311.0,353.8 H313.2 M311.0,359.8 H313.2 M311.0,365.8 H313.2 M311.0,371.8 H313.2 M311.0,383.7 H313.2 M311.0,389.7 H313.2 M311.0,395.7 H313.2 M311.0,401.7 H313.2 M311.0,413.7 H313.2 M311.0,419.7 H313.2 M311.0,425.6 H313.2 M311.0,431.6 H313.2 M311.0,443.6 H313.2 M311.0,449.6 H313.2 M311.0,455.6 H313.2 M311.0,461.6 H313.2 M311.0,473.5 H313.2 M311.0,479.5 H313.2 M311.0,485.5 H313.2 M311.0,491.5 H313.2 M311.0,503.5 H313.2 M311.0,509.5 H313.2 M311.0,515.4 H313.2 M311.0,521.4 H313.2" stroke="#202020" stroke-width="1"/>
<path d="M338.8,75.39999999999999 V78.8 M398.8,75.39999999999999 V78.8 M458.8,75.39999999999999 V78.8 M518.8,75.39999999999999 V78.8 M309.8,108.4 H313.2 M309.8,168.2 H313.2 M309.8,228.1 H313.2 M309.8,288.0 H313.2 M309.8,347.8 H313.2 M309.8,407.7 H313.2 M309.8,467.5 H313.2 M309.8,527.4 H313.2" stroke="#202020" stroke-width="1"/>
<path d="M368.8,71.6 V78.8 M428.8,71.6 V78.8 M488.8,71.6 V78.8 M548.8,71.6 V78.8 M307.0,138.3 H313.2 M307.0,198.2 H313.2 M307.0,258.0 H313.2 M307.0,317.9 H313.2 M307.0,377.8 H313.2 M307.0,437.6 H313.2 M307.0,497.5 H313.2" stroke="#101010" stroke-width="1.1"/>
<text x="313.4" y="75.4" font-family="Liberation Sans" font-size="8.7" font-weight="normal" fill="#151515">200</text>
<text x="369.6" y="75.4" font-family="Liberation Sans" font-size="8.7" font-weight="normal" fill="#151515">-100</text>
<text x="430.2" y="75.4" font-family="Liberation Sans" font-size="8.7" font-weight="bold" fill="#151515">0</text>
<text x="489.8" y="75.4" font-family="Liberation Sans" font-size="8.7" font-weight="normal" fill="#151515">100</text>
<text x="549.8" y="75.4" font-family="Liberation Sans" font-size="8.7" font-weight="normal" fill="#151515">200</text>
<text transform="translate(309.6,136.5) rotate(-90)" font-family="Liberation Sans" font-size="8.7" font-weight="normal" fill="#151515">300</text>
<text transform="translate(309.6,196.4) rotate(-90)" font-family="Liberation Sans" font-size="8.7" font-weight="normal" fill="#151515">200</text>
<text transform="translate(309.6,256.2) rotate(-90)" font-family="Liberation Sans" font-size="8.7" font-weight="normal" fill="#151515">100</text>
<text transform="translate(309.6,316.1) rotate(-90)" font-family="Liberation Sans" font-size="8.7" font-weight="bold" fill="#151515">0</text>
<text transform="translate(309.6,376.0) rotate(-90)" font-family="Liberation Sans" font-size="8.7" font-weight="normal" fill="#151515">-100</text>
<text transform="translate(309.6,435.8) rotate(-90)" font-family="Liberation Sans" font-size="8.7" font-weight="normal" fill="#151515">-200</text>
<text transform="translate(309.6,495.7) rotate(-90)" font-family="Liberation Sans" font-size="8.7" font-weight="normal" fill="#151515">-300</text>
</svg>
<div class="abs" style="left:568px;top:67px;width:3px;height:466px;background:#dcd8fc"></div>
<!--RIGHT-->
<div id="rp" class="abs">
<div id="rphead" class="abs"></div>
<div id="rptb" class="abs"></div>
<i class="abs" style="left:4.2px;top:2.4px;width:1.6px;height:15px;background:repeating-linear-gradient(180deg,#f4f4ff 0 1.3px,transparent 1.3px 2.6px)"></i>
<span class="t " style="left:10.600000000000023px;top:4.70px;font-size:9.8px;transform:scaleX(0.905);color:#15152a">Eva.mod</span>
<svg class="abs" style="left:427px;top:5px;width:24px;height:10px" viewBox="0 0 24 10"><path d="M3.2,1 H7 M3.8,1 V5.4 M6.2,1 V5.4 M2.4,5.6 H7.8 M5.1,5.6 V9" stroke="#101018" stroke-width="1" fill="none"/><path d="M6.2,1 V5.4" stroke="#101018" stroke-width="1.7"/><path d="M15.2,2 L20.2,7.6 M20.2,2 L15.2,7.6" stroke="#101018" stroke-width="1.5"/></svg>
<svg class="ico" style="left:3.4px;top:22.200000000000003px;width:13.94px;height:13.4px" viewBox="0 0 14 14" preserveAspectRatio="none"><path d="M4,1.6 Q8,.4 12.4,1.4 V12 Q9.4,13.8 7.6,12.2 Q6,13.8 3.4,12.6 V8 Z" fill="#f0f6fe" stroke="#2f6ac0" stroke-width="1"/><path d="M9.6,1.2 V12.4" stroke="#8ab4ea" stroke-width="1.6"/><path d="M.8,.8 L6.4,6.4 M6.4,.8 L.8,6.4" stroke="#c8141e" stroke-width="1.9"/></svg>
<i class="dd" style="left:21.02px;top:28.399999999999995px;border-top-color:#1c1c28"></i>
<svg class="ico" style="left:29.57px;top:22.200000000000003px;width:13.36px;height:13.4px" viewBox="0 0 14 14" preserveAspectRatio="none"><rect x=".7" y=".7" width="9.4" height="12.6" fill="#dedaf7" stroke="#7268cc" stroke-width=".9"/><path d="M10.1,1.4 L13.3,.8 V12.4 L10.1,13.2" fill="#cfcaf2" stroke="#7268cc" stroke-width=".8"/><circle cx="5.2" cy="5.6" r="2.5" fill="#ebe8fb" stroke="#7268cc" stroke-width=".8"/><path d="M1.6,13 Q1.6,8.8 5.2,8.8 Q8.8,8.8 8.8,13 Z" fill="#9990e0" stroke="#7268cc" stroke-width=".6"/></svg>
<svg class="ico" style="left:47.51px;top:22.200000000000003px;width:13.36px;height:13.4px" viewBox="0 0 14 14" preserveAspectRatio="none"><rect x=".7" y=".7" width="12.6" height="12.6" rx="1.4" fill="#dedaf7" stroke="#7268cc" stroke-width="1"/><path d="M3.4,2.8 L11.6,7 L3.4,11.2 Z" fill="#9990e0" stroke="#7268cc" stroke-width=".8"/></svg>
<i class="vsep" style="left:64.56px;top:20.200000000000003px;height:19.0px;background:#7468c8;width:1.4px"></i>
<svg class="ico" style="left:69.75px;top:22.200000000000003px;width:13.55px;height:13.4px" viewBox="0 0 14 14" preserveAspectRatio="none"><path d="M2.6,2.6 V11.4 Q6,13.8 9.4,11.4 V2.6 Z" fill="url(#gc)" stroke="#1f4a94" stroke-width=".9"/><ellipse cx="6" cy="2.6" rx="3.4" ry="1.7" fill="#c8e0fa" stroke="#1f4a94" stroke-width=".9"/><path d="M.6,2.4 H2.4 M9.6,2.4 H11.4 M.6,11.8 H2.4 M9.6,11.8 H11.4" stroke="#1f4a94" stroke-width=".9"/><path d="M9.6,7.4 Q11.4,8.6 13.6,6.8" stroke="#5a9ae0" stroke-width=".8" fill="none"/></svg>
<svg class="ico" style="left:87.5px;top:21.900000000000002px;width:13.94px;height:14px" viewBox="0 0 14 14" preserveAspectRatio="none"><rect x=".7" y=".7" width="12.6" height="12.6" fill="#d6d0f2" stroke="#7268cc" stroke-width=".8" stroke-dasharray="1.4 1"/><path d="M3.8,3 V11 Q7,13 10.2,11 V3 Z" fill="#c4bdec" stroke="#7268cc" stroke-width=".7"/><ellipse cx="7" cy="3" rx="3.2" ry="1.4" fill="#dedaf7" stroke="#7268cc" stroke-width=".7"/></svg>
<svg class="ico" style="left:106.19px;top:21.6px;width:13.74px;height:14px" viewBox="0 0 14 14" preserveAspectRatio="none"><rect x=".8" y="5.2" width="8.4" height="8.2" fill="#fbf4e6" stroke="#6a3a1a" stroke-width=".7"/><rect x="1.2" y="5.6" width="7.6" height="7.4" fill="url(#bchk)"/><path d="M7.2,2.6 H10 V.6 L13.6,3.6 L10,6.6 V4.6 H7.2 Z" fill="#2fb84a" stroke="#137a2a" stroke-width=".6"/></svg>
<i class="vsep" style="left:122.5px;top:20.200000000000003px;height:19.0px;background:#7468c8;width:1.4px"></i>
<i class="abs" style="left:126.01px;top:20.400000000000002px;width:17.939999999999984px;height:19.000000000000004px;background:#fde1d2;box-shadow:inset 0 0 0 1px #fbd0b4"></i>
<svg class="ico" style="left:128.62px;top:22.000000000000004px;width:13.55px;height:13.8px" viewBox="0 0 14 14" preserveAspectRatio="none"><path d="M.6,13.2 Q.6,8.8 4.6,8.8 Q8.6,8.8 8.6,13.2 Z" fill="#7a3fd6" stroke="#5a28b0" stroke-width=".5"/><ellipse cx="4.6" cy="5.6" rx="2.9" ry="3.4" fill="#fdeecb" stroke="#c59a58" stroke-width=".8"/><path d="M9,.8 Q8.2,3.4 10,4.4 V6.4 H12 V4.4 Q13.8,3.4 13,.8 L12,2.6 H10 Z" fill="#f0f4fa" stroke="#3a4a7a" stroke-width=".7"/><rect x="9.6" y="6.4" width="2.8" height="7" rx=".8" fill="#3f56c0" stroke="#1f2a7a" stroke-width=".6"/></svg>
<i class="dd" style="left:145.31px;top:28.399999999999995px;border-top-color:#1c1c28"></i>
<svg class="ico" style="left:154.98px;top:22.400000000000002px;width:12.41px;height:13px" viewBox="0 0 14 14" preserveAspectRatio="none"><path d="M7,.8 V8 L1.2,12.4 M7,8 L12.8,12.4" fill="none" stroke="#1f8a2a" stroke-width="1.5" stroke-linecap="round"/></svg>
<i class="dd" style="left:171.11px;top:28.399999999999995px;border-top-color:#1c1c28"></i>
<svg class="ico" style="left:180.95px;top:22.200000000000003px;width:12.79px;height:13.6px" viewBox="0 0 14 14" preserveAspectRatio="none"><rect x=".8" y=".7" width="10.4" height="12.6" rx="1" fill="#f2f6fe" stroke="#1f3f8a" stroke-width="1.1"/><rect x="1.3" y="1.2" width="9.4" height="2.4" fill="#2f66c0"/><rect x="1.3" y="8.8" width="9.4" height="2" fill="#5a48c8"/><rect x="1.3" y="10.8" width="9.4" height="2" fill="#2a2a5a"/><path d="M8.6,10.8 H13.4 M11.6,9 Q13.8,10.8 11.6,12.8" stroke="#2f5aa8" stroke-width="1" fill="none"/></svg>
<i class="dd" style="left:196.9px;top:28.399999999999995px;border-top-color:#1c1c28"></i>
<svg class="ico" style="left:205.63px;top:22.000000000000004px;width:13.55px;height:13.8px" viewBox="0 0 14 14" preserveAspectRatio="none"><path d="M.7,12.6 V1.6 H4.6 L5.8,3.2 H9 V5.4" fill="#a8c8f0" stroke="#2456a8" stroke-width=".9"/><path d="M2.8,5.4 H12 L10,12.6 H.7 Z" fill="url(#gw)" stroke="#2456a8" stroke-width=".9"/><path d="M6.2,13.4 Q6.2,9.8 9.8,9.8 Q13.4,9.8 13.4,13.4 Z" fill="#7a3fd6" stroke="#5a28b0" stroke-width=".5"/><ellipse cx="9.8" cy="6.6" rx="2.6" ry="3.2" fill="#fdeecb" stroke="#c59a58" stroke-width=".8"/></svg>
<i class="dd" style="left:222.5px;top:28.399999999999995px;border-top-color:#1c1c28"></i>
<svg class="ico" style="left:231.42px;top:21.800000000000004px;width:13.74px;height:14px" viewBox="0 0 14 14" preserveAspectRatio="none"><rect x=".8" y="6" width="12.4" height="7.4" fill="url(#gk)" stroke="#123a7a" stroke-width=".7"/><path d="M.8,6 H13.2 V8 H.8 Z" fill="#143c84"/><path d="M2,8 L3.4,6 M5,8 L6.4,6 M8,8 L9.4,6 M11,8 L12.4,6" stroke="#eef4fc" stroke-width="1.2"/><path d="M.6,5.4 L12.4,.8 L13.2,2.8 L1.4,7.2 Z" fill="#143c84" stroke="#0e2a60" stroke-width=".5"/><path d="M3.2,4.4 L4.6,5.8 M6.2,3.2 L7.6,4.6 M9.2,2 L10.6,3.4" stroke="#eef4fc" stroke-width="1.2"/></svg>
<svg class="ico" style="left:250.11px;top:22.000000000000004px;width:12.98px;height:13.8px" viewBox="0 0 14 14" preserveAspectRatio="none"><path d="M.8,.8 H9.4 L13.2,4 V13.2 H.8 Z" fill="#dedaf7" stroke="#7268cc" stroke-width=".9"/><path d="M2.2,2.2 V12" stroke="#7268cc" stroke-width=".8" stroke-dasharray=".8 .8"/><circle cx="7.4" cy="7.4" r="3.4" fill="#ebe8fb" stroke="#7268cc" stroke-width=".9"/><circle cx="7.4" cy="7.4" r="1.3" fill="#9990e0" stroke="#7268cc" stroke-width=".6"/><path d="M9.6,10 L12.4,13" stroke="#7268cc" stroke-width="1.2"/></svg>
<svg class="ico" style="left:269.73px;top:21.800000000000004px;width:12.03px;height:14px" viewBox="0 0 14 14" preserveAspectRatio="none"><rect x="1" y=".4" width="12" height="13.2" fill="#f0d6d2" opacity=".8"/><text x="7" y="13" font-family="Liberation Serif" font-weight="bold" font-size="17.5" text-anchor="middle" fill="url(#gt)" stroke="#1c4c98" stroke-width=".3">T</text></svg>
<svg class="ico" style="left:286.18px;top:21.400000000000002px;width:12.98px;height:14.6px" viewBox="0 0 14 14" preserveAspectRatio="none"><text transform="scale(1.5,1)" x="4.5" y="13" font-family="Liberation Serif" font-weight="bold" font-style="italic" font-size="19" text-anchor="middle" fill="#1e8a4a" stroke="#1e8a4a" stroke-width=".3">i</text></svg>
<svg class="ico" style="left:302.81px;top:22.000000000000004px;width:13.94px;height:13.6px" viewBox="0 0 14 14" preserveAspectRatio="none"><path d="M1,11.4 Q.4,8 3,6.6 L9.4,1.6 Q12.6,.2 13.4,2 Q13.6,3.2 11.6,4.4 L13,5.2 Q12.6,9 9,10.4 Q6,11.4 3.4,13 Z" fill="#dedaf7" stroke="#7268cc" stroke-width=".8"/><path d="M6,8.6 Q8,6.4 10.6,6 M3,10 Q4,8 6,8.6" fill="none" stroke="#7268cc" stroke-width=".8"/><circle cx="5.8" cy="9.6" r="1.2" fill="#9990e0" stroke="#7268cc" stroke-width=".5"/></svg>
<svg class="abs" style="left:0;top:40px;width:453px;height:426px" viewBox="571 107 453 426">
<defs>
<linearGradient id="sk" x1="0" y1="0" x2="1" y2="0"><stop offset="0" stop-color="#b98258"/><stop offset=".18" stop-color="#e6ac82"/><stop offset=".55" stop-color="#f3c29a"/><stop offset=".85" stop-color="#e2a67c"/><stop offset="1" stop-color="#c48c62"/></linearGradient>
<linearGradient id="skL" gradientUnits="userSpaceOnUse" x1="758" y1="0" x2="800" y2="0"><stop offset="0" stop-color="#c48c62"/><stop offset=".2" stop-color="#ecb28a"/><stop offset=".5" stop-color="#ecb08a"/><stop offset=".78" stop-color="#c48c64"/><stop offset="1" stop-color="#7e5236"/></linearGradient>
<linearGradient id="skR" gradientUnits="userSpaceOnUse" x1="794" y1="0" x2="837" y2="0"><stop offset="0" stop-color="#d09068"/><stop offset=".25" stop-color="#f4c29c"/><stop offset=".68" stop-color="#f0b890"/><stop offset=".88" stop-color="#d0946c"/><stop offset="1" stop-color="#8e5e40"/></linearGradient>
<linearGradient id="skA" x1="0" y1="0" x2="1" y2="0"><stop offset="0" stop-color="#eeb48c"/><stop offset=".3" stop-color="#f6c6a2"/><stop offset=".72" stop-color="#f0b890"/><stop offset="1" stop-color="#c48c64"/></linearGradient>
<linearGradient id="skAL" x1="0" y1="0" x2="1" y2="0"><stop offset="0" stop-color="#eab48c"/><stop offset=".55" stop-color="#e0a67e"/><stop offset="1" stop-color="#9c6a48"/></linearGradient>
<linearGradient id="tor" gradientUnits="userSpaceOnUse" x1="760" y1="0" x2="838" y2="0"><stop offset="0" stop-color="#c48c62"/><stop offset=".1" stop-color="#e6aa82"/><stop offset=".38" stop-color="#f6c4a0"/><stop offset=".75" stop-color="#f0b890"/><stop offset=".9" stop-color="#eab088"/><stop offset="1" stop-color="#dca27a"/></linearGradient>
<linearGradient id="hair" x1="0" y1="0" x2="1" y2="1"><stop offset="0" stop-color="#d8b27e"/><stop offset=".5" stop-color="#c09460"/><stop offset="1" stop-color="#96703e"/></linearGradient>
<linearGradient id="face" x1="0" y1="0" x2="1" y2="0"><stop offset="0" stop-color="#c89472"/><stop offset=".3" stop-color="#ecbc9a"/><stop offset=".7" stop-color="#f0bea0"/><stop offset="1" stop-color="#d8a280"/></linearGradient>
<linearGradient id="neck" x1="0" y1="0" x2="0" y2="1"><stop offset="0" stop-color="#7a4c32"/><stop offset=".5" stop-color="#c48c66"/><stop offset="1" stop-color="#ecb890"/></linearGradient>
<radialGradient id="cup" cx=".5" cy=".22" r=".8"><stop offset="0" stop-color="#f4e2e2"/><stop offset=".5" stop-color="#e6caca"/><stop offset=".74" stop-color="#a88484"/><stop offset=".9" stop-color="#4a3434"/><stop offset="1" stop-color="#2a1c1c"/></radialGradient>
<linearGradient id="pan" x1="1" y1="0" x2=".25" y2="1"><stop offset="0" stop-color="#f2dcdc"/><stop offset=".45" stop-color="#e2c6ca"/><stop offset=".8" stop-color="#b8989e"/><stop offset="1" stop-color="#6a4c52"/></linearGradient>
<radialGradient id="knee"><stop offset="0" stop-color="#c07e5c" stop-opacity=".45"/><stop offset="1" stop-color="#c07e5c" stop-opacity="0"/></radialGradient>
<linearGradient id="shoe" x1="0" y1="0" x2="0" y2="1"><stop offset="0" stop-color="#4a4a48"/><stop offset="1" stop-color="#1c1c1c"/></linearGradient>
</defs>
<path d="M766,188 C760,194 758,200 756.5,210 C754.5,222 752.5,232 750.5,240 C747,253 741,266 737.8,275 C733.5,288 730.5,300 729,310 L725,320 L737,318 L737.8,313.8 C744,298 752,284 758,273.4 C763,263 766,256 767.7,248.8 L771,215 Z" fill="url(#skAL)"/>
<path d="M765,228 C764.6,238 766.4,245 767.7,248.8 C766,257 762,266 757,276.4 C752,274 750,266 752,256 C754,247 758,237 762,229 Z" fill="#8e6244" opacity=".6"/>
<path d="M729,309 C726,316 724,322 723.7,328 C724,335 725.5,342 728,348 C729.6,349.4 730.2,346 729.6,341 C731,344.6 732.8,345 733.2,341.6 C734.2,337 735.6,330 736.2,326 L738,313 Z" fill="#eab48e"/>
<path d="M726.4,330 L728.4,344 M729.6,331 L730,341" stroke="#b88460" stroke-width=".6" fill="none"/>
<path d="M851,323 C848,330 845,336 844.4,342 C844,346.4 845.2,348 846.2,345 L848,339 C848.5,348 850,356 853,363 C854.5,366 856,365 856.5,362 C858,364 859.6,362 860,358 C862,352 864,344 865,338 C865,332 864,328 862.6,323.4 Z" fill="#ecb690"/>
<path d="M851,344 L853.4,360 M855,345 L856.6,360 M858.6,344 L860,356" stroke="#b88460" stroke-width=".6" fill="none"/>
<path d="M761.5,294 C759,305 758.4,320 758.6,334 C758.9,342 759.6,349 760.6,355 C763,372 768,386 771.2,397.3 C772.5,408 772.5,420 773,430 C774,445 775.5,458 777.3,470.3 L780,492 L792.6,492 C793.5,478 794.5,465 795.8,452.7 C797.5,442 799.8,432 799.3,422.9 C798,416 796.5,412 795.8,408 C793,396 791.5,384 791.4,372.7 C791.8,360 793,348 794,336.7 L797,294 Z" fill="url(#skL)"/>
<path d="M793,294 L794,336.7 C795,350 796.5,362 797.6,372.7 C799,384 801.5,392 803.7,400 C806,410 808,418 809,426.4 C810.3,440 810.8,452 810.7,461.5 L809.6,491 L824.6,491 C826.5,478 828.5,467 830,456.2 C832,446 833,436 832.7,426.4 C831.5,418 829.8,410 829.2,402.6 C829,394 829.8,386 831,378 C833.5,366 835.5,356 836.2,346.4 C836.6,336 836.2,322 835.4,312 C835,305 834.2,299 833,294 Z" fill="url(#skR)"/>
<ellipse cx="782" cy="403" rx="9" ry="10" fill="url(#knee)"/><ellipse cx="816" cy="391" rx="10" ry="9" fill="url(#knee)"/>
<path d="M789,180 C780,184 772,186 765.7,187.6 C762,195 762,205 762.6,215.5 C763,225 766,240 767.7,248.8 C768.5,258 768,264 767.7,270 C765,280 762.5,288 761.5,296.2 L761.4,298 C766,302 772,306.4 778,308 C784,310 794,309.6 802.2,306 C811,301 820,297 827.8,294.6 L833.4,298.6 L832.7,296 C829,287 826,279 825.7,271.6 C826,262 828,254 828.3,245 C829,238 829,232 828.5,225 C829,218 829,212 829,206 L838,192 C837,189 836,187.4 834,186.5 C826,184.6 818,183 812,179 Z" fill="url(#tor)"/>
<path d="M826,212 C829,222 829,236 828.3,246 C827,256 826,264 825.7,271.6 C823,262 822,250 822.6,240 C823,230 824,220 826,212 Z" fill="#a06e4a" opacity=".45"/>
<ellipse cx="784.4" cy="285" rx="1.6" ry="2.6" fill="#a06a4a" opacity=".8"/>
<path d="M770,262 C772,272 770,284 766,294 C764,286 766,272 768,262 Z" fill="#c08a62" opacity=".5"/>
<path d="M787.4,164 L787.6,175 C787.6,179 788,181 789,182.4 C795,187.5 806,185.5 813,180 L809.6,157 Z" fill="url(#neck)"/>
<path d="M826,194 C828,186 841,187 845,199.8 C847,208 847.5,215 848.2,221.8 C849.5,230 851.5,236 852.9,240 C856,250 857.5,258 858.2,264.6 C860,285 861.5,305 862.6,324.4 L851,326 C848,305 844,285 840.6,268 C838,256 835,247 833.6,240 C830.5,232 828,222 826,212 Z" fill="url(#skA)"/>
<path d="M763,221 C780,218.5 805,220 828.5,226 L828.5,244 C822,247.4 815,244.6 812,243 C810,248 796,250 791,243 C789,240 788,238.4 787,240 L781,241 C778,247 768,248 764.5,241 C763,235 762.5,228 763,221 Z" fill="#ecd6d6"/>
<path d="M762.8,226 C766,224 774,226 778.6,233 C780.4,238 779.6,243 776,246 C771,248.6 765.6,246 764,240 C763,235 762.6,230 762.8,226 Z" fill="url(#cup)"/>
<path d="M790,231 C796,224.6 808,225 812.6,232 C815,238 813.6,244 808,247.4 C801,250 793.4,247.6 790.6,241 C789.4,237 789.4,234 790,231 Z" fill="url(#cup)"/>
<path d="M764.4,240.4 C767,248 776.4,248.8 779.6,241 C776.6,245.4 768,245.4 764.4,240.4 Z M790.4,240.6 C794,250.4 809.4,251 813.6,241 C809,247.2 795,246.8 790.4,240.6 Z" fill="#2c1e1e" opacity=".85"/>
<path d="M787.6,226 C786.8,232 787.4,237 789.6,241" stroke="#a8786a" stroke-width=".9" fill="none" opacity=".8"/>
<path d="M762.2,292.4 C766,297 772,303 778,305.4 C784,307.4 794,307 802.2,303 C811,298 820,293.6 827.8,290.8 L832.6,292 L833.6,299 C826,300.4 817,302 810.8,304.3 C806,307 803,310 801,314 C799,318 797.6,322 796.8,326.2 C796,330 794.6,334 793.7,336.5 C792,336.6 791,335.6 790,334.7 C787.4,332 785,329 782.8,326.2 C779.6,322 777,318 774.3,314 C771,309 768,305 765.8,301.9 C764,298.6 762.8,295.6 762.2,292.4 Z" fill="url(#pan)"/>
<path d="M762.6,293 C766,297.6 772,303.4 778,305.8 C784,307.8 794,307.4 802.2,303.4 C811,298.4 820,294 827.8,291.2" stroke="#f6ecea" stroke-width="1.2" fill="none"/>
<path d="M790,334.7 C791,335.8 792.4,336.8 793.7,336.5 L794,331 Z" fill="#3a2a2c"/>
<path d="M779,128 C782,120 789,116.6 796.4,116.6 C808.4,116.6 817,126 817.8,140 C818.6,150 817.6,160 814.6,168 C813,163 811.4,160 810,158 L808,150 L806,137 L790,128 Z" fill="url(#hair)"/>
<path d="M777.6,132 C776.2,140 776.2,148 777.6,155 C779,162 783,167.4 787.4,168.6 C792,169.4 798,166 803,162 L808.6,158.6 L811,150 L810,138 C806,127 795,122 786,124 C781,125.6 778.4,128.6 777.6,132 Z" fill="url(#face)"/>
<path d="M777.6,132 C776.2,140 776.2,148 777.6,155 C779,162 783,167.4 787.4,168.6 C785,163 783.6,158 783,153 C781,152 780.4,150 781,147 C782,143 782.6,138 782.4,133 C782,129 781,127 780,127.4 C778.6,128.6 778,130 777.6,132 Z" fill="#9a6848" opacity=".32"/>
<ellipse cx="800.6" cy="148.6" rx="5.6" ry="4" fill="#f09c88" opacity=".4"/>
<path d="M777.4,133 C778,126 783,120.6 790,118.6 C800,116.4 810,121 814,130 C816,136 816.4,142 815.4,148 L812.4,150 C812,146 811.4,143.4 810,141.4 C809.4,140 808.8,139 808.3,138.4 C805,131 800,125 795,122.8 C790,121.6 786,122.6 784.4,124.2 C781,126.6 778.6,129.6 777.4,133 Z" fill="url(#hair)"/>
<path d="M786,121 C796,118.6 807,124 811.4,136 M793,118.4 C803,118.6 812,126 814,140 M800,118 C808,120 815,128 816.4,140" stroke="#8c6636" stroke-width=".7" fill="none" opacity=".55"/>
<path d="M783,123 C788,119 796,118.4 802,120.6" stroke="#ecd0a0" stroke-width="1.6" fill="none" opacity=".6"/>
<ellipse cx="810.6" cy="148.2" rx="2.5" ry="6.2" fill="#dea480"/><path d="M809.8,144 C812,146 812,152 810,154" stroke="#9a6646" stroke-width=".7" fill="none"/>
<rect x="807.8" y="155.6" width="1.8" height="3.8" fill="#eeeacc" stroke="#8a8460" stroke-width=".3"/>
<path d="M812.2,156.6 L813.4,161.6 L811.8,160 Z" fill="#c0203a"/>
<path d="M777.2,143.2 C778.6,141.6 781,141.6 782.4,143 C781,144.8 778.6,145 777.2,143.2 Z" fill="#3a302c"/><path d="M787.6,142.6 C790,140.4 794.4,140.4 797,142.4 C794.4,145 790,145 787.6,142.6 Z" fill="#3a302c"/>
<path d="M776.8,140 C778.6,138.4 781.4,138.6 783,139.8 M786.4,139 C790,137 795.4,137.2 798.6,139.8" stroke="#8a5c3e" stroke-width="1" fill="none"/>
<path d="M786.6,144.6 C790,146.6 794.6,146.6 797.6,144.4" stroke="#a87460" stroke-width=".8" fill="none" opacity=".6"/>
<path d="M783.6,143.6 C782.4,147 780.6,150 780.2,152.2 C781.2,153.8 783.4,154 785.8,153" stroke="#8a5a40" stroke-width=".8" fill="none"/><ellipse cx="781.4" cy="153" rx="1.3" ry=".7" fill="#4a2e22"/>
<path d="M778.6,158.2 C780.6,156.8 783,157.2 784.4,157.8 C786.6,156.8 789,157.6 790.6,158.8 C787.6,161.8 781.4,161.6 778.6,158.2 Z" fill="#c4665c"/><path d="M778.6,158.4 C782,159.2 787,159.2 790.6,158.8" stroke="#8a3c3a" stroke-width=".5" fill="none"/>
<path d="M787.4,168.4 C792,169.6 798,166.4 803,162.2 L808.6,158.8 L809,162.4 C804,167.6 797,171.6 788,171.4 Z" fill="#3e2618" opacity=".7"/>
<path d="M770,505 C774,498 778,493 780,491.4 L792.6,491.4 L793.4,494 C790,498 784,503.6 778,506 Z" fill="#e8b08a"/>
<path d="M759.8,514 C759,508 764,505 770,504.5 C776,504 782,502 786,498 C789,495 792,492.5 793.4,492.8 C795.5,496 795.5,501 795,503.8 C790,507 784,509 780,511 C774,516.6 763,520 759.8,514 Z" fill="url(#shoe)"/>
<path d="M778.6,490.8 C783,491.6 787,493.6 789.8,496.4" stroke="#2a2a2a" stroke-width="1.5" fill="none"/>
<path d="M763,510 C766,507.4 771,506.6 775,507" stroke="#6a6a68" stroke-width="1" fill="none" opacity=".7"/>
<path d="M803,512.6 C805,505 807.5,498 809.6,490.4 L824.6,490.4 L825.2,501.4 C822,505 815,510.6 808,513 Z" fill="#ecb48e"/>
<path d="M793,522.5 C792,516 797,512.5 803,512 C810,511.5 818,508 822,504 C823.5,502 824.5,501 825,501.4 C827,504 827,508 826.3,510 C822,514 816,518 812,521 C806,526.6 796,528 793,522.5 Z" fill="url(#shoe)"/>
<path d="M806.7,497.4 C812,498.4 819,502 823.4,506.6" stroke="#2a2a2a" stroke-width="1.7" fill="none"/>
<path d="M796,518.4 C799,515.6 804,514.6 808,515" stroke="#6a6a68" stroke-width="1" fill="none" opacity=".7"/>
<path d="M786.7,172.6 C791,176.6 803,175.4 809.5,169.6 M784.6,181.6 C786,187.4 804,187 814.6,178.6 M810.3,179 L830.4,148.4 L855.8,156.6 L834.3,187.3 L828,178 L814.2,177.4 L810.3,179 M765.5,187.6 L757.4,175.6 L740.3,237.5 L723.4,296.2 L729,306.8 M765.7,187.6 C762,196 762,206 762.6,215.5 M762.6,219.5 C780,216.6 806,218.4 828.5,225.3 M744.9,233.6 L799.5,235.2 M844.2,203 L857.6,221.5 L849,221.5 M831.7,236 C838,234.6 844,233.4 849.7,232.3 M840.6,267.2 C846,265 852,263.6 857.3,263.2 M851.2,324.6 C855,323.8 859,323.8 862.6,324.4 M820,275.2 L838.9,277 L850.3,327.4 L831.8,325 M761.5,296.6 C775,301.4 815,303 833.6,298 M795.4,347.2 C805,353.4 826,353 836.8,347 M798.8,377.6 C808,383 824,382.4 831.8,377 M802,400.8 C809,405.8 822,405.4 828.8,400.4 M808.1,438.6 C815,444.8 827,444.4 833,438.6 M809.8,485 C813,489.4 822,489 825.5,484.2 C822,482.8 813,483.2 809.8,485 M821,515.5 V533 M796.3,526.6 V533" fill="none" stroke="#1c1cf4" stroke-width="1.3" stroke-linejoin="round"/>
<circle cx="843" cy="152.6" r="2" fill="#1c1cf4"/>
<circle cx="740.3" cy="237.5" r="1.7" fill="#1c1cf4"/>
<circle cx="764.2" cy="234" r="1.9" fill="#1c1cf4"/>
<circle cx="759.6" cy="233.8" r="1.1" fill="#1c1cf4"/>
<circle cx="799.4" cy="235.2" r="1.2" fill="#1c1cf4"/>
<circle cx="820" cy="275.2" r="1.4" fill="#1c1cf4"/>
<circle cx="844.5" cy="302.4" r="1.5" fill="#1c1cf4"/>
<circle cx="831.8" cy="325" r="1.3" fill="#1c1cf4"/>
<circle cx="834.3" cy="187.3" r="1.3" fill="#1c1cf4"/>
<circle cx="765.6" cy="187.6" r="1.2" fill="#1c1cf4"/>
<circle cx="810.6" cy="179" r="1.2" fill="#1c1cf4"/>
<circle cx="796.3" cy="527" r="1.4" fill="#1c1cf4"/>
</svg>
</div>
<!--BOTTOM-->
<div class="abs" style="left:0;top:530.6px;width:299px;height:2.6px;background:#fcfcfc"></div>
<div class="abs" style="left:0;top:532.8px;width:1024px;height:1.2px;background:linear-gradient(90deg,#9284e2 0%,#9c8adc 30%,#b498cc 50%,#dcaeb4 62%,#f4be9c 85%,#fcc494 100%)"></div>
<div class="abs" style="left:0;top:534px;width:1024px;height:1px;background:#a6a2aa"></div>
</body>
</html>
